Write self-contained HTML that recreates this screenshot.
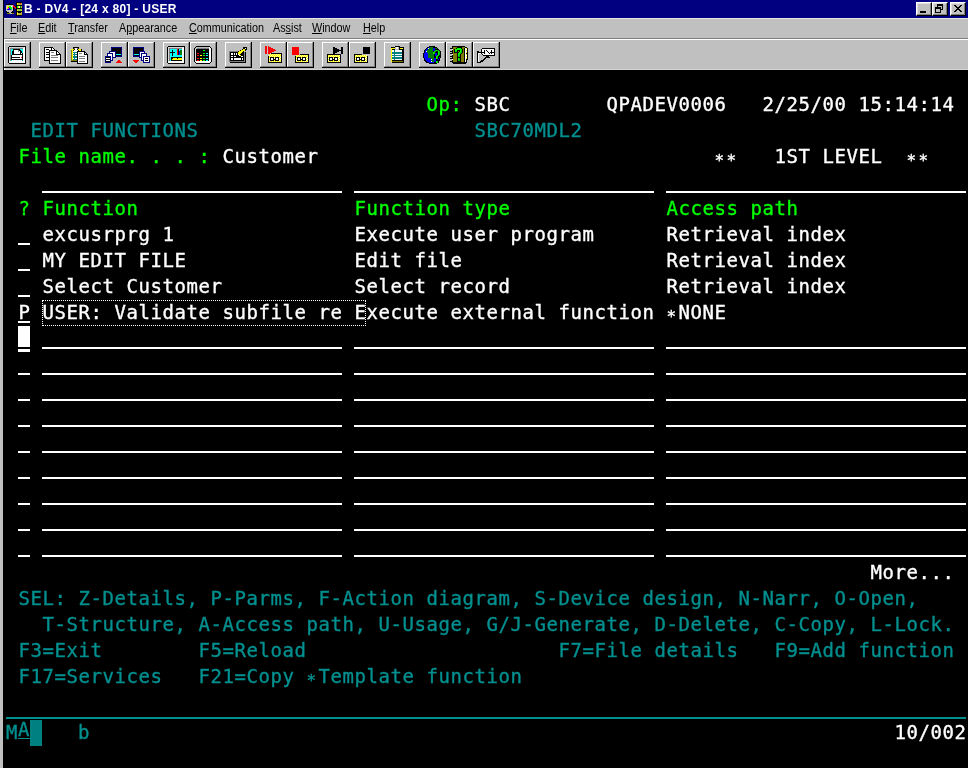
<!DOCTYPE html>
<html><head><meta charset="utf-8"><title>B - DV4 - [24 x 80] - USER</title>
<style>
html,body{margin:0;padding:0;background:#000;}
body{width:968px;height:768px;position:relative;overflow:hidden;font-family:"Liberation Sans",sans-serif;}
#lb{position:absolute;left:0;top:0;width:3px;height:768px;background:#c0c0c0;border-right:1px solid #000;}
#title{position:absolute;left:4px;top:0;width:964px;height:18px;background:#000080;}
#title .tt{position:absolute;left:20px;top:2px;color:#fff;font:bold 12px "Liberation Sans",sans-serif;line-height:14px;white-space:pre;letter-spacing:0.28px}
#menu{position:absolute;left:4px;top:18px;width:964px;height:19px;background:#c0c0c0;border-top:1px solid #e4e4e4}
#menu span{position:absolute;top:2px;font:12px "Liberation Sans",sans-serif;line-height:14px;color:#000;white-space:pre;transform:scaleX(0.9);transform-origin:0 0}
#menu u{text-decoration:underline;text-underline-offset:1px}
#sep{position:absolute;left:4px;top:38px;width:964px;height:1px;background:#808080;border-bottom:1px solid #fff}
#tool{position:absolute;left:4px;top:40px;width:964px;height:30px;background:#c0c0c0;}
.tb{position:absolute;top:42px;width:24px;height:23px;background:#c0c0c0;border:1px solid;border-color:#fff #808080 #808080 #fff;box-shadow:1px 0 0 #000,0 1px 0 #000,1px 1px 0 #000}
.tb svg{position:absolute;left:0;top:0}
.wb{position:absolute;top:2px;width:14px;height:12px;background:#c0c0c0;border:1px solid;border-color:#fff #000 #000 #fff;box-shadow:inset -1px -1px 0 #808080,inset 1px 1px 0 #dfdfdf}
.t{position:absolute;font:19px "DejaVu Sans Mono","Liberation Mono",monospace;letter-spacing:0.56px;line-height:26px;height:26px;white-space:pre;margin-top:-1px;-webkit-text-stroke:0.35px}
.t b{font-weight:normal;font-size:16px;letter-spacing:2.37px;position:relative;top:3px}
.g{color:#00ff00} .w{color:#fff} .c{color:#009090}
.u{position:absolute;height:2px;background:#fff;display:block}
.blk{position:absolute;display:block}
</style></head><body>
<div id="lb"></div>
<div id="title" style="will-change:transform"><span class="tt">B - DV4 - [24 x 80] - USER</span></div>
<div id="menu" style="will-change:transform">
<span style="left:6px"><u>F</u>ile</span><span style="left:34px"><u>E</u>dit</span><span style="left:64px"><u>T</u>ransfer</span><span style="left:115px">A<u>p</u>pearance</span><span style="left:185px"><u>C</u>ommunication</span><span style="left:269px">As<u>s</u>ist</span><span style="left:308px"><u>W</u>indow</span><span style="left:359px"><u>H</u>elp</span>
</div>
<div id="sep"></div>
<div id="tool"></div>
<i class="blk" style="left:4px;top:39px;width:1px;height:31px;background:#fff"></i>
<i class="blk" style="left:5px;top:69px;width:963px;height:1px;background:#d4d4d4"></i>
<div class="tb" style="left:4px"><svg width="18" height="18" viewBox="0 0 18 18" shape-rendering="crispEdges" style="position:absolute;left:3px;top:3px;"><rect x="1" y="0" width="17" height="1" fill="#000"/><rect x="0" y="1" width="1" height="1" fill="#000"/><rect x="1" y="1" width="15" height="1" fill="#d8d8d8"/><rect x="16" y="1" width="1" height="1" fill="#fff"/><rect x="17" y="1" width="1" height="1" fill="#000"/><rect x="0" y="2" width="1" height="1" fill="#000"/><rect x="1" y="2" width="1" height="1" fill="#d8d8d8"/><rect x="2" y="2" width="13" height="1" fill="#808080"/><rect x="15" y="2" width="2" height="1" fill="#fff"/><rect x="17" y="2" width="1" height="1" fill="#000"/><rect x="0" y="3" width="1" height="1" fill="#000"/><rect x="1" y="3" width="1" height="1" fill="#d8d8d8"/><rect x="2" y="3" width="1" height="1" fill="#808080"/><rect x="3" y="3" width="2" height="1" fill="#0ff"/><rect x="5" y="3" width="7" height="1" fill="#000"/><rect x="12" y="3" width="3" height="1" fill="#0ff"/><rect x="15" y="3" width="2" height="1" fill="#fff"/><rect x="17" y="3" width="1" height="1" fill="#000"/><rect x="0" y="4" width="1" height="1" fill="#000"/><rect x="1" y="4" width="1" height="1" fill="#d8d8d8"/><rect x="2" y="4" width="1" height="1" fill="#808080"/><rect x="3" y="4" width="2" height="1" fill="#0ff"/><rect x="5" y="4" width="1" height="1" fill="#000"/><rect x="6" y="4" width="4" height="1" fill="#fff"/><rect x="10" y="4" width="1" height="1" fill="#808080"/><rect x="11" y="4" width="2" height="1" fill="#000"/><rect x="13" y="4" width="2" height="1" fill="#0ff"/><rect x="15" y="4" width="2" height="1" fill="#fff"/><rect x="17" y="4" width="1" height="1" fill="#000"/><rect x="0" y="5" width="1" height="1" fill="#000"/><rect x="1" y="5" width="1" height="1" fill="#d8d8d8"/><rect x="2" y="5" width="1" height="1" fill="#808080"/><rect x="3" y="5" width="1" height="1" fill="#0ff"/><rect x="4" y="5" width="2" height="1" fill="#000"/><rect x="6" y="5" width="4" height="1" fill="#fff"/><rect x="10" y="5" width="1" height="1" fill="#808080"/><rect x="11" y="5" width="1" height="1" fill="#fff"/><rect x="12" y="5" width="2" height="1" fill="#000"/><rect x="14" y="5" width="1" height="1" fill="#0ff"/><rect x="15" y="5" width="2" height="1" fill="#fff"/><rect x="17" y="5" width="1" height="1" fill="#000"/><rect x="0" y="6" width="1" height="1" fill="#000"/><rect x="1" y="6" width="1" height="1" fill="#d8d8d8"/><rect x="2" y="6" width="1" height="1" fill="#808080"/><rect x="3" y="6" width="1" height="1" fill="#0ff"/><rect x="4" y="6" width="2" height="1" fill="#000"/><rect x="6" y="6" width="6" height="1" fill="#fff"/><rect x="12" y="6" width="2" height="1" fill="#000"/><rect x="14" y="6" width="1" height="1" fill="#0ff"/><rect x="15" y="6" width="2" height="1" fill="#fff"/><rect x="17" y="6" width="1" height="1" fill="#000"/><rect x="0" y="7" width="1" height="1" fill="#000"/><rect x="1" y="7" width="1" height="1" fill="#d8d8d8"/><rect x="2" y="7" width="1" height="1" fill="#808080"/><rect x="3" y="7" width="1" height="1" fill="#0ff"/><rect x="4" y="7" width="2" height="1" fill="#000"/><rect x="6" y="7" width="6" height="1" fill="#fff"/><rect x="12" y="7" width="1" height="1" fill="#000"/><rect x="13" y="7" width="1" height="1" fill="#fff"/><rect x="14" y="7" width="1" height="1" fill="#000"/><rect x="15" y="7" width="2" height="1" fill="#fff"/><rect x="17" y="7" width="1" height="1" fill="#000"/><rect x="0" y="8" width="1" height="1" fill="#000"/><rect x="1" y="8" width="1" height="1" fill="#d8d8d8"/><rect x="2" y="8" width="1" height="1" fill="#808080"/><rect x="3" y="8" width="1" height="1" fill="#0ff"/><rect x="4" y="8" width="11" height="1" fill="#000"/><rect x="15" y="8" width="2" height="1" fill="#fff"/><rect x="17" y="8" width="1" height="1" fill="#000"/><rect x="0" y="9" width="1" height="1" fill="#000"/><rect x="1" y="9" width="1" height="1" fill="#d8d8d8"/><rect x="2" y="9" width="1" height="1" fill="#808080"/><rect x="3" y="9" width="1" height="1" fill="#000"/><rect x="4" y="9" width="10" height="1" fill="#fff"/><rect x="14" y="9" width="1" height="1" fill="#000"/><rect x="15" y="9" width="2" height="1" fill="#fff"/><rect x="17" y="9" width="1" height="1" fill="#000"/><rect x="0" y="10" width="1" height="1" fill="#000"/><rect x="1" y="10" width="1" height="1" fill="#d8d8d8"/><rect x="2" y="10" width="1" height="1" fill="#808080"/><rect x="3" y="10" width="1" height="1" fill="#000"/><rect x="4" y="10" width="10" height="1" fill="#fff"/><rect x="14" y="10" width="1" height="1" fill="#000"/><rect x="15" y="10" width="2" height="1" fill="#fff"/><rect x="17" y="10" width="1" height="1" fill="#000"/><rect x="0" y="11" width="1" height="1" fill="#000"/><rect x="1" y="11" width="1" height="1" fill="#d8d8d8"/><rect x="2" y="11" width="1" height="1" fill="#808080"/><rect x="3" y="11" width="9" height="1" fill="#000"/><rect x="12" y="11" width="1" height="1" fill="#fff"/><rect x="13" y="11" width="1" height="1" fill="#f00"/><rect x="14" y="11" width="1" height="1" fill="#000"/><rect x="15" y="11" width="2" height="1" fill="#fff"/><rect x="17" y="11" width="1" height="1" fill="#000"/><rect x="0" y="12" width="1" height="1" fill="#000"/><rect x="1" y="12" width="1" height="1" fill="#d8d8d8"/><rect x="2" y="12" width="1" height="1" fill="#808080"/><rect x="3" y="12" width="1" height="1" fill="#000"/><rect x="4" y="12" width="10" height="1" fill="#fff"/><rect x="14" y="12" width="1" height="1" fill="#000"/><rect x="15" y="12" width="2" height="1" fill="#fff"/><rect x="17" y="12" width="1" height="1" fill="#000"/><rect x="0" y="13" width="1" height="1" fill="#000"/><rect x="1" y="13" width="1" height="1" fill="#d8d8d8"/><rect x="2" y="13" width="1" height="1" fill="#808080"/><rect x="3" y="13" width="12" height="1" fill="#000"/><rect x="15" y="13" width="2" height="1" fill="#fff"/><rect x="17" y="13" width="1" height="1" fill="#000"/><rect x="0" y="14" width="1" height="1" fill="#000"/><rect x="1" y="14" width="1" height="1" fill="#d8d8d8"/><rect x="2" y="14" width="1" height="1" fill="#808080"/><rect x="3" y="14" width="1" height="1" fill="#0ff"/><rect x="4" y="14" width="10" height="1" fill="#fff"/><rect x="14" y="14" width="1" height="1" fill="#008080"/><rect x="15" y="14" width="2" height="1" fill="#fff"/><rect x="17" y="14" width="1" height="1" fill="#000"/><rect x="0" y="15" width="1" height="1" fill="#000"/><rect x="1" y="15" width="16" height="1" fill="#fff"/><rect x="17" y="15" width="1" height="1" fill="#000"/><rect x="0" y="16" width="1" height="1" fill="#000"/><rect x="1" y="16" width="16" height="1" fill="#fff"/><rect x="17" y="16" width="1" height="1" fill="#000"/><rect x="1" y="17" width="17" height="1" fill="#000"/></svg></div>
<div class="tb" style="left:39px"><svg width="17" height="17" viewBox="0 0 17 17" shape-rendering="crispEdges" style="position:absolute;left:4px;top:4px;"><rect x="0" y="0" width="9" height="1" fill="#000"/><rect x="0" y="1" width="1" height="1" fill="#000"/><rect x="1" y="1" width="6" height="1" fill="#fff"/><rect x="7" y="1" width="1" height="1" fill="#000"/><rect x="8" y="1" width="1" height="1" fill="#fff"/><rect x="9" y="1" width="1" height="1" fill="#000"/><rect x="0" y="2" width="1" height="1" fill="#000"/><rect x="1" y="2" width="1" height="1" fill="#fff"/><rect x="2" y="2" width="3" height="1" fill="#000"/><rect x="5" y="2" width="2" height="1" fill="#fff"/><rect x="7" y="2" width="1" height="1" fill="#000"/><rect x="8" y="2" width="2" height="1" fill="#fff"/><rect x="10" y="2" width="1" height="1" fill="#000"/><rect x="0" y="3" width="1" height="1" fill="#000"/><rect x="1" y="3" width="4" height="1" fill="#fff"/><rect x="5" y="3" width="8" height="1" fill="#000"/><rect x="0" y="4" width="1" height="1" fill="#000"/><rect x="1" y="4" width="4" height="1" fill="#fff"/><rect x="5" y="4" width="1" height="1" fill="#000"/><rect x="6" y="4" width="6" height="1" fill="#fff"/><rect x="12" y="4" width="2" height="1" fill="#000"/><rect x="0" y="5" width="1" height="1" fill="#000"/><rect x="1" y="5" width="1" height="1" fill="#fff"/><rect x="2" y="5" width="4" height="1" fill="#000"/><rect x="6" y="5" width="1" height="1" fill="#fff"/><rect x="7" y="5" width="3" height="1" fill="#808080"/><rect x="10" y="5" width="2" height="1" fill="#fff"/><rect x="12" y="5" width="1" height="1" fill="#000"/><rect x="13" y="5" width="1" height="1" fill="#fff"/><rect x="14" y="5" width="1" height="1" fill="#000"/><rect x="0" y="6" width="1" height="1" fill="#000"/><rect x="1" y="6" width="4" height="1" fill="#fff"/><rect x="5" y="6" width="1" height="1" fill="#000"/><rect x="6" y="6" width="6" height="1" fill="#fff"/><rect x="12" y="6" width="1" height="1" fill="#000"/><rect x="13" y="6" width="2" height="1" fill="#fff"/><rect x="15" y="6" width="1" height="1" fill="#000"/><rect x="0" y="7" width="1" height="1" fill="#000"/><rect x="1" y="7" width="1" height="1" fill="#fff"/><rect x="2" y="7" width="4" height="1" fill="#000"/><rect x="6" y="7" width="6" height="1" fill="#fff"/><rect x="12" y="7" width="5" height="1" fill="#000"/><rect x="0" y="8" width="1" height="1" fill="#000"/><rect x="1" y="8" width="4" height="1" fill="#fff"/><rect x="5" y="8" width="1" height="1" fill="#000"/><rect x="6" y="8" width="1" height="1" fill="#fff"/><rect x="7" y="8" width="7" height="1" fill="#808080"/><rect x="14" y="8" width="2" height="1" fill="#fff"/><rect x="16" y="8" width="1" height="1" fill="#000"/><rect x="0" y="9" width="1" height="1" fill="#000"/><rect x="1" y="9" width="4" height="1" fill="#fff"/><rect x="5" y="9" width="1" height="1" fill="#000"/><rect x="6" y="9" width="10" height="1" fill="#fff"/><rect x="16" y="9" width="1" height="1" fill="#000"/><rect x="0" y="10" width="1" height="1" fill="#000"/><rect x="1" y="10" width="1" height="1" fill="#fff"/><rect x="2" y="10" width="4" height="1" fill="#000"/><rect x="6" y="10" width="1" height="1" fill="#fff"/><rect x="7" y="10" width="7" height="1" fill="#808080"/><rect x="14" y="10" width="2" height="1" fill="#fff"/><rect x="16" y="10" width="1" height="1" fill="#000"/><rect x="0" y="11" width="1" height="1" fill="#000"/><rect x="1" y="11" width="4" height="1" fill="#fff"/><rect x="5" y="11" width="1" height="1" fill="#000"/><rect x="6" y="11" width="10" height="1" fill="#fff"/><rect x="16" y="11" width="1" height="1" fill="#000"/><rect x="0" y="12" width="1" height="1" fill="#000"/><rect x="1" y="12" width="4" height="1" fill="#fff"/><rect x="5" y="12" width="1" height="1" fill="#000"/><rect x="6" y="12" width="10" height="1" fill="#fff"/><rect x="16" y="12" width="1" height="1" fill="#000"/><rect x="0" y="13" width="6" height="1" fill="#000"/><rect x="6" y="13" width="1" height="1" fill="#fff"/><rect x="7" y="13" width="7" height="1" fill="#808080"/><rect x="14" y="13" width="2" height="1" fill="#fff"/><rect x="16" y="13" width="1" height="1" fill="#000"/><rect x="5" y="14" width="1" height="1" fill="#000"/><rect x="6" y="14" width="10" height="1" fill="#fff"/><rect x="16" y="14" width="1" height="1" fill="#000"/><rect x="5" y="15" width="1" height="1" fill="#000"/><rect x="6" y="15" width="10" height="1" fill="#fff"/><rect x="16" y="15" width="1" height="1" fill="#000"/><rect x="5" y="16" width="12" height="1" fill="#000"/></svg></div>
<div class="tb" style="left:66px"><svg width="17" height="17" viewBox="0 0 17 17" shape-rendering="crispEdges" style="position:absolute;left:4px;top:4px;"><rect x="2" y="0" width="6" height="1" fill="#000"/><rect x="2" y="1" width="1" height="1" fill="#000"/><rect x="3" y="1" width="1" height="1" fill="#808080"/><rect x="4" y="1" width="2" height="1" fill="#fff"/><rect x="6" y="1" width="1" height="1" fill="#808080"/><rect x="7" y="1" width="1" height="1" fill="#000"/><rect x="0" y="2" width="3" height="1" fill="#ff0"/><rect x="3" y="2" width="1" height="1" fill="#000"/><rect x="4" y="2" width="2" height="1" fill="#fff"/><rect x="6" y="2" width="1" height="1" fill="#000"/><rect x="7" y="2" width="3" height="1" fill="#ff0"/><rect x="10" y="2" width="1" height="1" fill="#000"/><rect x="0" y="3" width="1" height="1" fill="#808000"/><rect x="1" y="3" width="1" height="1" fill="#ff0"/><rect x="2" y="3" width="1" height="1" fill="#000"/><rect x="3" y="3" width="4" height="1" fill="#fff"/><rect x="7" y="3" width="1" height="1" fill="#000"/><rect x="8" y="3" width="2" height="1" fill="#ff0"/><rect x="10" y="3" width="1" height="1" fill="#000"/><rect x="0" y="4" width="1" height="1" fill="#808000"/><rect x="1" y="4" width="1" height="1" fill="#ff0"/><rect x="2" y="4" width="4" height="1" fill="#fff"/><rect x="6" y="4" width="8" height="1" fill="#000"/><rect x="0" y="5" width="1" height="1" fill="#808000"/><rect x="1" y="5" width="1" height="1" fill="#ff0"/><rect x="2" y="5" width="4" height="1" fill="#008080"/><rect x="6" y="5" width="1" height="1" fill="#000"/><rect x="7" y="5" width="6" height="1" fill="#fff"/><rect x="13" y="5" width="2" height="1" fill="#000"/><rect x="0" y="6" width="1" height="1" fill="#808000"/><rect x="1" y="6" width="1" height="1" fill="#ff0"/><rect x="2" y="6" width="1" height="1" fill="#fff"/><rect x="3" y="6" width="1" height="1" fill="#008080"/><rect x="4" y="6" width="2" height="1" fill="#fff"/><rect x="6" y="6" width="1" height="1" fill="#000"/><rect x="7" y="6" width="1" height="1" fill="#fff"/><rect x="8" y="6" width="3" height="1" fill="#808080"/><rect x="11" y="6" width="2" height="1" fill="#fff"/><rect x="13" y="6" width="1" height="1" fill="#000"/><rect x="14" y="6" width="1" height="1" fill="#fff"/><rect x="15" y="6" width="1" height="1" fill="#000"/><rect x="0" y="7" width="1" height="1" fill="#808000"/><rect x="1" y="7" width="1" height="1" fill="#ff0"/><rect x="2" y="7" width="4" height="1" fill="#008080"/><rect x="6" y="7" width="1" height="1" fill="#000"/><rect x="7" y="7" width="6" height="1" fill="#fff"/><rect x="13" y="7" width="4" height="1" fill="#000"/><rect x="0" y="8" width="1" height="1" fill="#808000"/><rect x="1" y="8" width="1" height="1" fill="#ff0"/><rect x="2" y="8" width="1" height="1" fill="#fff"/><rect x="3" y="8" width="1" height="1" fill="#008080"/><rect x="4" y="8" width="2" height="1" fill="#fff"/><rect x="6" y="8" width="1" height="1" fill="#000"/><rect x="7" y="8" width="9" height="1" fill="#fff"/><rect x="16" y="8" width="1" height="1" fill="#000"/><rect x="0" y="9" width="1" height="1" fill="#808000"/><rect x="1" y="9" width="1" height="1" fill="#ff0"/><rect x="2" y="9" width="4" height="1" fill="#008080"/><rect x="6" y="9" width="1" height="1" fill="#000"/><rect x="7" y="9" width="1" height="1" fill="#fff"/><rect x="8" y="9" width="6" height="1" fill="#808080"/><rect x="14" y="9" width="2" height="1" fill="#fff"/><rect x="16" y="9" width="1" height="1" fill="#000"/><rect x="0" y="10" width="1" height="1" fill="#808000"/><rect x="1" y="10" width="1" height="1" fill="#ff0"/><rect x="2" y="10" width="4" height="1" fill="#008080"/><rect x="6" y="10" width="1" height="1" fill="#000"/><rect x="7" y="10" width="9" height="1" fill="#fff"/><rect x="16" y="10" width="1" height="1" fill="#000"/><rect x="0" y="11" width="1" height="1" fill="#808000"/><rect x="1" y="11" width="1" height="1" fill="#ff0"/><rect x="2" y="11" width="1" height="1" fill="#fff"/><rect x="3" y="11" width="1" height="1" fill="#008080"/><rect x="4" y="11" width="2" height="1" fill="#fff"/><rect x="6" y="11" width="1" height="1" fill="#000"/><rect x="7" y="11" width="1" height="1" fill="#fff"/><rect x="8" y="11" width="6" height="1" fill="#808080"/><rect x="14" y="11" width="2" height="1" fill="#fff"/><rect x="16" y="11" width="1" height="1" fill="#000"/><rect x="0" y="12" width="1" height="1" fill="#808000"/><rect x="1" y="12" width="1" height="1" fill="#ff0"/><rect x="2" y="12" width="4" height="1" fill="#008080"/><rect x="6" y="12" width="1" height="1" fill="#000"/><rect x="7" y="12" width="9" height="1" fill="#fff"/><rect x="16" y="12" width="1" height="1" fill="#000"/><rect x="0" y="13" width="6" height="1" fill="#808000"/><rect x="6" y="13" width="1" height="1" fill="#000"/><rect x="7" y="13" width="9" height="1" fill="#fff"/><rect x="16" y="13" width="1" height="1" fill="#000"/><rect x="0" y="14" width="7" height="1" fill="#000"/><rect x="7" y="14" width="1" height="1" fill="#fff"/><rect x="8" y="14" width="6" height="1" fill="#808080"/><rect x="14" y="14" width="2" height="1" fill="#fff"/><rect x="16" y="14" width="1" height="1" fill="#000"/><rect x="6" y="15" width="1" height="1" fill="#000"/><rect x="7" y="15" width="9" height="1" fill="#fff"/><rect x="16" y="15" width="1" height="1" fill="#000"/><rect x="6" y="16" width="11" height="1" fill="#000"/></svg></div>
<div class="tb" style="left:101px"><svg width="17" height="16" viewBox="0 0 17 16" shape-rendering="crispEdges" style="position:absolute;left:3px;top:4px;"><rect x="6" y="0" width="11" height="1" fill="#000080"/><rect x="6" y="1" width="1" height="1" fill="#000080"/><rect x="7" y="1" width="9" height="1" fill="#000"/><rect x="16" y="1" width="1" height="1" fill="#000080"/><rect x="6" y="2" width="1" height="1" fill="#000080"/><rect x="7" y="2" width="9" height="1" fill="#000"/><rect x="16" y="2" width="1" height="1" fill="#000080"/><rect x="6" y="3" width="1" height="1" fill="#000080"/><rect x="7" y="3" width="9" height="1" fill="#000"/><rect x="16" y="3" width="1" height="1" fill="#000080"/><rect x="4" y="4" width="7" height="1" fill="#000080"/><rect x="11" y="4" width="5" height="1" fill="#000"/><rect x="16" y="4" width="1" height="1" fill="#000080"/><rect x="4" y="5" width="1" height="1" fill="#000080"/><rect x="5" y="5" width="5" height="1" fill="#fff"/><rect x="10" y="5" width="1" height="1" fill="#000080"/><rect x="11" y="5" width="5" height="1" fill="#000"/><rect x="16" y="5" width="1" height="1" fill="#000080"/><rect x="2" y="6" width="6" height="1" fill="#000080"/><rect x="8" y="6" width="2" height="1" fill="#fff"/><rect x="10" y="6" width="1" height="1" fill="#000080"/><rect x="11" y="6" width="5" height="1" fill="#000"/><rect x="16" y="6" width="1" height="1" fill="#000080"/><rect x="2" y="7" width="1" height="1" fill="#000080"/><rect x="3" y="7" width="4" height="1" fill="#fff"/><rect x="7" y="7" width="1" height="1" fill="#000080"/><rect x="8" y="7" width="2" height="1" fill="#fff"/><rect x="10" y="7" width="1" height="1" fill="#000080"/><rect x="11" y="7" width="5" height="1" fill="#0ff"/><rect x="16" y="7" width="1" height="1" fill="#000080"/><rect x="2" y="8" width="1" height="1" fill="#000080"/><rect x="3" y="8" width="4" height="1" fill="#fff"/><rect x="7" y="8" width="1" height="1" fill="#000080"/><rect x="8" y="8" width="2" height="1" fill="#fff"/><rect x="10" y="8" width="1" height="1" fill="#000080"/><rect x="11" y="8" width="5" height="1" fill="#000"/><rect x="16" y="8" width="1" height="1" fill="#000080"/><rect x="0" y="9" width="6" height="1" fill="#000080"/><rect x="6" y="9" width="1" height="1" fill="#fff"/><rect x="7" y="9" width="1" height="1" fill="#000080"/><rect x="8" y="9" width="2" height="1" fill="#fff"/><rect x="10" y="9" width="7" height="1" fill="#000080"/><rect x="0" y="10" width="1" height="1" fill="#000080"/><rect x="1" y="10" width="4" height="1" fill="#000"/><rect x="5" y="10" width="1" height="1" fill="#000080"/><rect x="6" y="10" width="1" height="1" fill="#fff"/><rect x="7" y="10" width="4" height="1" fill="#000080"/><rect x="0" y="11" width="1" height="1" fill="#000080"/><rect x="1" y="11" width="4" height="1" fill="#fff"/><rect x="5" y="11" width="1" height="1" fill="#000080"/><rect x="6" y="11" width="1" height="1" fill="#fff"/><rect x="7" y="11" width="1" height="1" fill="#000080"/><rect x="0" y="12" width="1" height="1" fill="#000080"/><rect x="1" y="12" width="4" height="1" fill="#000"/><rect x="5" y="12" width="1" height="1" fill="#000080"/><rect x="6" y="12" width="1" height="1" fill="#fff"/><rect x="7" y="12" width="1" height="1" fill="#000080"/><rect x="0" y="13" width="1" height="1" fill="#000080"/><rect x="1" y="13" width="4" height="1" fill="#fff"/><rect x="5" y="13" width="3" height="1" fill="#000080"/><rect x="13" y="13" width="2" height="1" fill="#f00"/><rect x="0" y="14" width="1" height="1" fill="#000080"/><rect x="1" y="14" width="4" height="1" fill="#000"/><rect x="5" y="14" width="1" height="1" fill="#000080"/><rect x="12" y="14" width="4" height="1" fill="#f00"/><rect x="0" y="15" width="6" height="1" fill="#000080"/><rect x="11" y="15" width="6" height="1" fill="#f00"/></svg></div>
<div class="tb" style="left:128px"><svg width="17" height="16" viewBox="0 0 17 16" shape-rendering="crispEdges" style="position:absolute;left:4px;top:4px;"><rect x="0" y="0" width="11" height="1" fill="#000080"/><rect x="0" y="1" width="1" height="1" fill="#000080"/><rect x="1" y="1" width="9" height="1" fill="#000"/><rect x="10" y="1" width="1" height="1" fill="#000080"/><rect x="0" y="2" width="1" height="1" fill="#000080"/><rect x="1" y="2" width="9" height="1" fill="#000"/><rect x="10" y="2" width="1" height="1" fill="#000080"/><rect x="0" y="3" width="1" height="1" fill="#000080"/><rect x="1" y="3" width="9" height="1" fill="#000"/><rect x="10" y="3" width="1" height="1" fill="#000080"/><rect x="0" y="4" width="1" height="1" fill="#000080"/><rect x="1" y="4" width="5" height="1" fill="#000"/><rect x="6" y="4" width="6" height="1" fill="#000080"/><rect x="0" y="5" width="1" height="1" fill="#000080"/><rect x="1" y="5" width="5" height="1" fill="#000"/><rect x="6" y="5" width="1" height="1" fill="#000080"/><rect x="7" y="5" width="4" height="1" fill="#fff"/><rect x="11" y="5" width="1" height="1" fill="#000080"/><rect x="0" y="6" width="1" height="1" fill="#000080"/><rect x="1" y="6" width="5" height="1" fill="#000"/><rect x="6" y="6" width="1" height="1" fill="#000080"/><rect x="7" y="6" width="1" height="1" fill="#fff"/><rect x="8" y="6" width="6" height="1" fill="#000080"/><rect x="0" y="7" width="1" height="1" fill="#000080"/><rect x="1" y="7" width="5" height="1" fill="#0ff"/><rect x="6" y="7" width="1" height="1" fill="#000080"/><rect x="7" y="7" width="1" height="1" fill="#fff"/><rect x="8" y="7" width="1" height="1" fill="#000080"/><rect x="9" y="7" width="4" height="1" fill="#fff"/><rect x="13" y="7" width="1" height="1" fill="#000080"/><rect x="0" y="8" width="1" height="1" fill="#000080"/><rect x="1" y="8" width="5" height="1" fill="#000"/><rect x="6" y="8" width="1" height="1" fill="#000080"/><rect x="7" y="8" width="1" height="1" fill="#fff"/><rect x="8" y="8" width="1" height="1" fill="#000080"/><rect x="9" y="8" width="4" height="1" fill="#fff"/><rect x="13" y="8" width="1" height="1" fill="#000080"/><rect x="0" y="9" width="7" height="1" fill="#000080"/><rect x="7" y="9" width="1" height="1" fill="#fff"/><rect x="8" y="9" width="1" height="1" fill="#000080"/><rect x="9" y="9" width="1" height="1" fill="#fff"/><rect x="10" y="9" width="7" height="1" fill="#000080"/><rect x="6" y="10" width="3" height="1" fill="#000080"/><rect x="9" y="10" width="1" height="1" fill="#fff"/><rect x="10" y="10" width="1" height="1" fill="#000080"/><rect x="11" y="10" width="5" height="1" fill="#fff"/><rect x="16" y="10" width="1" height="1" fill="#000080"/><rect x="8" y="11" width="1" height="1" fill="#000080"/><rect x="9" y="11" width="1" height="1" fill="#fff"/><rect x="10" y="11" width="1" height="1" fill="#000080"/><rect x="11" y="11" width="1" height="1" fill="#fff"/><rect x="12" y="11" width="3" height="1" fill="#000"/><rect x="15" y="11" width="1" height="1" fill="#fff"/><rect x="16" y="11" width="1" height="1" fill="#000080"/><rect x="8" y="12" width="1" height="1" fill="#000080"/><rect x="9" y="12" width="1" height="1" fill="#fff"/><rect x="10" y="12" width="1" height="1" fill="#000080"/><rect x="11" y="12" width="5" height="1" fill="#fff"/><rect x="16" y="12" width="1" height="1" fill="#000080"/><rect x="0" y="13" width="6" height="1" fill="#f00"/><rect x="8" y="13" width="3" height="1" fill="#000080"/><rect x="11" y="13" width="1" height="1" fill="#fff"/><rect x="12" y="13" width="3" height="1" fill="#000"/><rect x="15" y="13" width="1" height="1" fill="#fff"/><rect x="16" y="13" width="1" height="1" fill="#000080"/><rect x="1" y="14" width="4" height="1" fill="#f00"/><rect x="10" y="14" width="1" height="1" fill="#000080"/><rect x="11" y="14" width="5" height="1" fill="#fff"/><rect x="16" y="14" width="1" height="1" fill="#000080"/><rect x="2" y="15" width="2" height="1" fill="#f00"/><rect x="10" y="15" width="7" height="1" fill="#000080"/></svg></div>
<div class="tb" style="left:163px"><svg width="18" height="18" viewBox="0 0 18 18" shape-rendering="crispEdges" style="position:absolute;left:3px;top:3px;"><rect x="1" y="0" width="17" height="1" fill="#000"/><rect x="0" y="1" width="1" height="1" fill="#000"/><rect x="1" y="1" width="15" height="1" fill="#d8d8d8"/><rect x="16" y="1" width="1" height="1" fill="#fff"/><rect x="17" y="1" width="1" height="1" fill="#000"/><rect x="0" y="2" width="1" height="1" fill="#000"/><rect x="1" y="2" width="1" height="1" fill="#d8d8d8"/><rect x="2" y="2" width="13" height="1" fill="#808080"/><rect x="15" y="2" width="2" height="1" fill="#fff"/><rect x="17" y="2" width="1" height="1" fill="#000"/><rect x="0" y="3" width="1" height="1" fill="#000"/><rect x="1" y="3" width="1" height="1" fill="#d8d8d8"/><rect x="2" y="3" width="1" height="1" fill="#808080"/><rect x="3" y="3" width="7" height="1" fill="#0ff"/><rect x="10" y="3" width="1" height="1" fill="#f00"/><rect x="11" y="3" width="1" height="1" fill="#000"/><rect x="12" y="3" width="3" height="1" fill="#0ff"/><rect x="15" y="3" width="2" height="1" fill="#fff"/><rect x="17" y="3" width="1" height="1" fill="#000"/><rect x="0" y="4" width="1" height="1" fill="#000"/><rect x="1" y="4" width="1" height="1" fill="#d8d8d8"/><rect x="2" y="4" width="1" height="1" fill="#808080"/><rect x="3" y="4" width="2" height="1" fill="#0ff"/><rect x="5" y="4" width="1" height="1" fill="#000"/><rect x="6" y="4" width="4" height="1" fill="#0ff"/><rect x="10" y="4" width="1" height="1" fill="#f00"/><rect x="11" y="4" width="1" height="1" fill="#000"/><rect x="12" y="4" width="1" height="1" fill="#0ff"/><rect x="13" y="4" width="2" height="1" fill="#008000"/><rect x="15" y="4" width="2" height="1" fill="#fff"/><rect x="17" y="4" width="1" height="1" fill="#000"/><rect x="0" y="5" width="1" height="1" fill="#000"/><rect x="1" y="5" width="1" height="1" fill="#d8d8d8"/><rect x="2" y="5" width="1" height="1" fill="#808080"/><rect x="3" y="5" width="2" height="1" fill="#0ff"/><rect x="5" y="5" width="1" height="1" fill="#000"/><rect x="6" y="5" width="4" height="1" fill="#0ff"/><rect x="10" y="5" width="1" height="1" fill="#f00"/><rect x="11" y="5" width="1" height="1" fill="#000"/><rect x="12" y="5" width="1" height="1" fill="#00f"/><rect x="13" y="5" width="2" height="1" fill="#008000"/><rect x="15" y="5" width="2" height="1" fill="#fff"/><rect x="17" y="5" width="1" height="1" fill="#000"/><rect x="0" y="6" width="1" height="1" fill="#000"/><rect x="1" y="6" width="1" height="1" fill="#d8d8d8"/><rect x="2" y="6" width="1" height="1" fill="#808080"/><rect x="3" y="6" width="5" height="1" fill="#000"/><rect x="8" y="6" width="2" height="1" fill="#0ff"/><rect x="10" y="6" width="1" height="1" fill="#f00"/><rect x="11" y="6" width="1" height="1" fill="#000"/><rect x="12" y="6" width="1" height="1" fill="#00f"/><rect x="13" y="6" width="2" height="1" fill="#008000"/><rect x="15" y="6" width="2" height="1" fill="#fff"/><rect x="17" y="6" width="1" height="1" fill="#000"/><rect x="0" y="7" width="1" height="1" fill="#000"/><rect x="1" y="7" width="1" height="1" fill="#d8d8d8"/><rect x="2" y="7" width="1" height="1" fill="#808080"/><rect x="3" y="7" width="2" height="1" fill="#0ff"/><rect x="5" y="7" width="1" height="1" fill="#000"/><rect x="6" y="7" width="4" height="1" fill="#0ff"/><rect x="10" y="7" width="1" height="1" fill="#f00"/><rect x="11" y="7" width="1" height="1" fill="#000"/><rect x="12" y="7" width="1" height="1" fill="#00f"/><rect x="13" y="7" width="2" height="1" fill="#008000"/><rect x="15" y="7" width="2" height="1" fill="#fff"/><rect x="17" y="7" width="1" height="1" fill="#000"/><rect x="0" y="8" width="1" height="1" fill="#000"/><rect x="1" y="8" width="1" height="1" fill="#d8d8d8"/><rect x="2" y="8" width="1" height="1" fill="#808080"/><rect x="3" y="8" width="2" height="1" fill="#0ff"/><rect x="5" y="8" width="1" height="1" fill="#000"/><rect x="6" y="8" width="4" height="1" fill="#0ff"/><rect x="10" y="8" width="1" height="1" fill="#f00"/><rect x="11" y="8" width="1" height="1" fill="#000"/><rect x="12" y="8" width="1" height="1" fill="#00f"/><rect x="13" y="8" width="2" height="1" fill="#008000"/><rect x="15" y="8" width="2" height="1" fill="#fff"/><rect x="17" y="8" width="1" height="1" fill="#000"/><rect x="0" y="9" width="1" height="1" fill="#000"/><rect x="1" y="9" width="1" height="1" fill="#d8d8d8"/><rect x="2" y="9" width="1" height="1" fill="#808080"/><rect x="3" y="9" width="2" height="1" fill="#0ff"/><rect x="5" y="9" width="1" height="1" fill="#000"/><rect x="6" y="9" width="9" height="1" fill="#0ff"/><rect x="15" y="9" width="2" height="1" fill="#fff"/><rect x="17" y="9" width="1" height="1" fill="#000"/><rect x="0" y="10" width="1" height="1" fill="#000"/><rect x="1" y="10" width="1" height="1" fill="#d8d8d8"/><rect x="2" y="10" width="1" height="1" fill="#808080"/><rect x="3" y="10" width="12" height="1" fill="#0ff"/><rect x="15" y="10" width="2" height="1" fill="#fff"/><rect x="17" y="10" width="1" height="1" fill="#000"/><rect x="0" y="11" width="1" height="1" fill="#000"/><rect x="1" y="11" width="1" height="1" fill="#d8d8d8"/><rect x="2" y="11" width="1" height="1" fill="#808080"/><rect x="3" y="11" width="1" height="1" fill="#0ff"/><rect x="4" y="11" width="11" height="1" fill="#000"/><rect x="15" y="11" width="2" height="1" fill="#fff"/><rect x="17" y="11" width="1" height="1" fill="#000"/><rect x="0" y="12" width="1" height="1" fill="#000"/><rect x="1" y="12" width="1" height="1" fill="#d8d8d8"/><rect x="2" y="12" width="1" height="1" fill="#808080"/><rect x="3" y="12" width="1" height="1" fill="#0ff"/><rect x="4" y="12" width="2" height="1" fill="#000"/><rect x="6" y="12" width="4" height="1" fill="#ff0"/><rect x="10" y="12" width="1" height="1" fill="#000"/><rect x="11" y="12" width="4" height="1" fill="#ff0"/><rect x="15" y="12" width="2" height="1" fill="#fff"/><rect x="17" y="12" width="1" height="1" fill="#000"/><rect x="0" y="13" width="1" height="1" fill="#000"/><rect x="1" y="13" width="1" height="1" fill="#d8d8d8"/><rect x="2" y="13" width="1" height="1" fill="#808080"/><rect x="3" y="13" width="1" height="1" fill="#0ff"/><rect x="4" y="13" width="1" height="1" fill="#000"/><rect x="5" y="13" width="10" height="1" fill="#ff0"/><rect x="15" y="13" width="2" height="1" fill="#fff"/><rect x="17" y="13" width="1" height="1" fill="#000"/><rect x="0" y="14" width="1" height="1" fill="#000"/><rect x="1" y="14" width="1" height="1" fill="#d8d8d8"/><rect x="2" y="14" width="1" height="1" fill="#808080"/><rect x="3" y="14" width="1" height="1" fill="#0ff"/><rect x="4" y="14" width="11" height="1" fill="#000"/><rect x="15" y="14" width="2" height="1" fill="#fff"/><rect x="17" y="14" width="1" height="1" fill="#000"/><rect x="0" y="15" width="1" height="1" fill="#000"/><rect x="1" y="15" width="16" height="1" fill="#fff"/><rect x="17" y="15" width="1" height="1" fill="#000"/><rect x="0" y="16" width="1" height="1" fill="#000"/><rect x="1" y="16" width="16" height="1" fill="#fff"/><rect x="17" y="16" width="1" height="1" fill="#000"/><rect x="1" y="17" width="17" height="1" fill="#000"/></svg></div>
<div class="tb" style="left:190px"><svg width="18" height="18" viewBox="0 0 18 18" shape-rendering="crispEdges" style="position:absolute;left:3px;top:3px;"><rect x="2" y="0" width="14" height="1" fill="#000"/><rect x="1" y="1" width="1" height="1" fill="#000"/><rect x="2" y="1" width="13" height="1" fill="#c0c0c0"/><rect x="15" y="1" width="1" height="1" fill="#fff"/><rect x="16" y="1" width="1" height="1" fill="#000"/><rect x="0" y="2" width="1" height="1" fill="#000"/><rect x="1" y="2" width="2" height="1" fill="#c0c0c0"/><rect x="3" y="2" width="12" height="1" fill="#808080"/><rect x="15" y="2" width="2" height="1" fill="#fff"/><rect x="17" y="2" width="1" height="1" fill="#000"/><rect x="0" y="3" width="1" height="1" fill="#000"/><rect x="1" y="3" width="1" height="1" fill="#d8d8d8"/><rect x="2" y="3" width="13" height="1" fill="#000"/><rect x="15" y="3" width="2" height="1" fill="#fff"/><rect x="17" y="3" width="1" height="1" fill="#000"/><rect x="0" y="4" width="1" height="1" fill="#000"/><rect x="1" y="4" width="1" height="1" fill="#d8d8d8"/><rect x="2" y="4" width="7" height="1" fill="#000"/><rect x="9" y="4" width="2" height="1" fill="#0f0"/><rect x="11" y="4" width="4" height="1" fill="#000"/><rect x="15" y="4" width="2" height="1" fill="#fff"/><rect x="17" y="4" width="1" height="1" fill="#000"/><rect x="0" y="5" width="1" height="1" fill="#000"/><rect x="1" y="5" width="1" height="1" fill="#d8d8d8"/><rect x="2" y="5" width="13" height="1" fill="#000"/><rect x="15" y="5" width="2" height="1" fill="#fff"/><rect x="17" y="5" width="1" height="1" fill="#000"/><rect x="0" y="6" width="1" height="1" fill="#000"/><rect x="1" y="6" width="1" height="1" fill="#d8d8d8"/><rect x="2" y="6" width="13" height="1" fill="#000"/><rect x="15" y="6" width="2" height="1" fill="#fff"/><rect x="17" y="6" width="1" height="1" fill="#000"/><rect x="0" y="7" width="1" height="1" fill="#000"/><rect x="1" y="7" width="1" height="1" fill="#d8d8d8"/><rect x="2" y="7" width="1" height="1" fill="#000"/><rect x="3" y="7" width="2" height="1" fill="#f00"/><rect x="5" y="7" width="4" height="1" fill="#000"/><rect x="9" y="7" width="2" height="1" fill="#0f0"/><rect x="11" y="7" width="1" height="1" fill="#000"/><rect x="12" y="7" width="2" height="1" fill="#0ff"/><rect x="14" y="7" width="1" height="1" fill="#000"/><rect x="15" y="7" width="2" height="1" fill="#fff"/><rect x="17" y="7" width="1" height="1" fill="#000"/><rect x="0" y="8" width="1" height="1" fill="#000"/><rect x="1" y="8" width="1" height="1" fill="#d8d8d8"/><rect x="2" y="8" width="13" height="1" fill="#000"/><rect x="15" y="8" width="2" height="1" fill="#fff"/><rect x="17" y="8" width="1" height="1" fill="#000"/><rect x="0" y="9" width="1" height="1" fill="#000"/><rect x="1" y="9" width="1" height="1" fill="#d8d8d8"/><rect x="2" y="9" width="1" height="1" fill="#000"/><rect x="3" y="9" width="2" height="1" fill="#f00"/><rect x="5" y="9" width="1" height="1" fill="#000"/><rect x="6" y="9" width="2" height="1" fill="#ff0"/><rect x="8" y="9" width="1" height="1" fill="#000"/><rect x="9" y="9" width="2" height="1" fill="#0f0"/><rect x="11" y="9" width="1" height="1" fill="#000"/><rect x="12" y="9" width="2" height="1" fill="#0ff"/><rect x="14" y="9" width="1" height="1" fill="#000"/><rect x="15" y="9" width="2" height="1" fill="#fff"/><rect x="17" y="9" width="1" height="1" fill="#000"/><rect x="0" y="10" width="1" height="1" fill="#000"/><rect x="1" y="10" width="1" height="1" fill="#d8d8d8"/><rect x="2" y="10" width="13" height="1" fill="#000"/><rect x="15" y="10" width="2" height="1" fill="#fff"/><rect x="17" y="10" width="1" height="1" fill="#000"/><rect x="0" y="11" width="1" height="1" fill="#000"/><rect x="1" y="11" width="1" height="1" fill="#d8d8d8"/><rect x="2" y="11" width="13" height="1" fill="#000"/><rect x="15" y="11" width="2" height="1" fill="#fff"/><rect x="17" y="11" width="1" height="1" fill="#000"/><rect x="0" y="12" width="1" height="1" fill="#000"/><rect x="1" y="12" width="1" height="1" fill="#d8d8d8"/><rect x="2" y="12" width="1" height="1" fill="#000"/><rect x="3" y="12" width="2" height="1" fill="#f00"/><rect x="5" y="12" width="1" height="1" fill="#000"/><rect x="6" y="12" width="2" height="1" fill="#ff0"/><rect x="8" y="12" width="1" height="1" fill="#000"/><rect x="9" y="12" width="2" height="1" fill="#0f0"/><rect x="11" y="12" width="1" height="1" fill="#000"/><rect x="12" y="12" width="2" height="1" fill="#0ff"/><rect x="14" y="12" width="1" height="1" fill="#000"/><rect x="15" y="12" width="2" height="1" fill="#fff"/><rect x="17" y="12" width="1" height="1" fill="#000"/><rect x="0" y="13" width="1" height="1" fill="#000"/><rect x="1" y="13" width="1" height="1" fill="#d8d8d8"/><rect x="2" y="13" width="13" height="1" fill="#000"/><rect x="15" y="13" width="2" height="1" fill="#fff"/><rect x="17" y="13" width="1" height="1" fill="#000"/><rect x="0" y="14" width="1" height="1" fill="#000"/><rect x="1" y="14" width="1" height="1" fill="#d8d8d8"/><rect x="2" y="14" width="1" height="1" fill="#000"/><rect x="3" y="14" width="2" height="1" fill="#f00"/><rect x="5" y="14" width="1" height="1" fill="#000"/><rect x="6" y="14" width="2" height="1" fill="#ff0"/><rect x="8" y="14" width="1" height="1" fill="#000"/><rect x="9" y="14" width="2" height="1" fill="#0f0"/><rect x="11" y="14" width="1" height="1" fill="#000"/><rect x="12" y="14" width="2" height="1" fill="#0ff"/><rect x="14" y="14" width="1" height="1" fill="#000"/><rect x="15" y="14" width="2" height="1" fill="#fff"/><rect x="17" y="14" width="1" height="1" fill="#000"/><rect x="0" y="15" width="1" height="1" fill="#000"/><rect x="1" y="15" width="16" height="1" fill="#fff"/><rect x="17" y="15" width="1" height="1" fill="#000"/><rect x="1" y="16" width="1" height="1" fill="#000"/><rect x="2" y="16" width="14" height="1" fill="#fff"/><rect x="16" y="16" width="1" height="1" fill="#000"/><rect x="2" y="17" width="14" height="1" fill="#000"/></svg></div>
<div class="tb" style="left:225px"><svg width="18" height="16" viewBox="0 0 18 16" shape-rendering="crispEdges" style="position:absolute;left:3px;top:4px;"><rect x="14" y="0" width="4" height="1" fill="#000"/><rect x="14" y="1" width="2" height="1" fill="#000"/><rect x="16" y="1" width="1" height="1" fill="#fff"/><rect x="17" y="1" width="1" height="1" fill="#000"/><rect x="13" y="2" width="1" height="1" fill="#000"/><rect x="14" y="2" width="2" height="1" fill="#ff0"/><rect x="16" y="2" width="2" height="1" fill="#000"/><rect x="11" y="3" width="1" height="1" fill="#000"/><rect x="12" y="3" width="4" height="1" fill="#ff0"/><rect x="16" y="3" width="1" height="1" fill="#000"/><rect x="0" y="4" width="9" height="1" fill="#808080"/><rect x="9" y="4" width="1" height="1" fill="#000"/><rect x="10" y="4" width="4" height="1" fill="#ff0"/><rect x="14" y="4" width="1" height="1" fill="#000"/><rect x="0" y="5" width="1" height="1" fill="#808080"/><rect x="1" y="5" width="8" height="1" fill="#000"/><rect x="9" y="5" width="4" height="1" fill="#ff0"/><rect x="13" y="5" width="2" height="1" fill="#000"/><rect x="15" y="5" width="1" height="1" fill="#808080"/><rect x="16" y="5" width="1" height="1" fill="#000"/><rect x="0" y="6" width="1" height="1" fill="#808080"/><rect x="1" y="6" width="1" height="1" fill="#000"/><rect x="2" y="6" width="2" height="1" fill="#fff"/><rect x="4" y="6" width="1" height="1" fill="#000"/><rect x="5" y="6" width="1" height="1" fill="#fff"/><rect x="6" y="6" width="1" height="1" fill="#000"/><rect x="7" y="6" width="1" height="1" fill="#fff"/><rect x="8" y="6" width="1" height="1" fill="#000"/><rect x="9" y="6" width="3" height="1" fill="#ff0"/><rect x="12" y="6" width="3" height="1" fill="#000"/><rect x="15" y="6" width="1" height="1" fill="#808080"/><rect x="16" y="6" width="1" height="1" fill="#000"/><rect x="0" y="7" width="1" height="1" fill="#808080"/><rect x="1" y="7" width="1" height="1" fill="#000"/><rect x="2" y="7" width="2" height="1" fill="#fff"/><rect x="4" y="7" width="1" height="1" fill="#000"/><rect x="5" y="7" width="1" height="1" fill="#fff"/><rect x="6" y="7" width="1" height="1" fill="#000"/><rect x="7" y="7" width="1" height="1" fill="#fff"/><rect x="8" y="7" width="1" height="1" fill="#000"/><rect x="9" y="7" width="1" height="1" fill="#fff"/><rect x="10" y="7" width="1" height="1" fill="#ff0"/><rect x="11" y="7" width="4" height="1" fill="#000"/><rect x="15" y="7" width="1" height="1" fill="#808080"/><rect x="16" y="7" width="1" height="1" fill="#000"/><rect x="0" y="8" width="1" height="1" fill="#808080"/><rect x="1" y="8" width="9" height="1" fill="#000"/><rect x="10" y="8" width="1" height="1" fill="#fff"/><rect x="11" y="8" width="1" height="1" fill="#ff0"/><rect x="12" y="8" width="3" height="1" fill="#000"/><rect x="15" y="8" width="1" height="1" fill="#808080"/><rect x="16" y="8" width="1" height="1" fill="#000"/><rect x="0" y="9" width="1" height="1" fill="#808080"/><rect x="1" y="9" width="1" height="1" fill="#000"/><rect x="2" y="9" width="2" height="1" fill="#fff"/><rect x="4" y="9" width="1" height="1" fill="#000"/><rect x="5" y="9" width="2" height="1" fill="#fff"/><rect x="7" y="9" width="5" height="1" fill="#000"/><rect x="12" y="9" width="2" height="1" fill="#fff"/><rect x="14" y="9" width="1" height="1" fill="#000"/><rect x="15" y="9" width="1" height="1" fill="#808080"/><rect x="16" y="9" width="1" height="1" fill="#000"/><rect x="0" y="10" width="1" height="1" fill="#808080"/><rect x="1" y="10" width="14" height="1" fill="#000"/><rect x="15" y="10" width="1" height="1" fill="#808080"/><rect x="16" y="10" width="1" height="1" fill="#000"/><rect x="0" y="11" width="1" height="1" fill="#808080"/><rect x="1" y="11" width="1" height="1" fill="#000"/><rect x="2" y="11" width="2" height="1" fill="#fff"/><rect x="4" y="11" width="1" height="1" fill="#000"/><rect x="5" y="11" width="7" height="1" fill="#fff"/><rect x="12" y="11" width="1" height="1" fill="#000"/><rect x="13" y="11" width="1" height="1" fill="#fff"/><rect x="14" y="11" width="1" height="1" fill="#000"/><rect x="15" y="11" width="1" height="1" fill="#808080"/><rect x="16" y="11" width="1" height="1" fill="#000"/><rect x="0" y="12" width="1" height="1" fill="#808080"/><rect x="1" y="12" width="1" height="1" fill="#000"/><rect x="2" y="12" width="2" height="1" fill="#fff"/><rect x="4" y="12" width="1" height="1" fill="#000"/><rect x="5" y="12" width="7" height="1" fill="#fff"/><rect x="12" y="12" width="1" height="1" fill="#000"/><rect x="13" y="12" width="1" height="1" fill="#fff"/><rect x="14" y="12" width="1" height="1" fill="#000"/><rect x="15" y="12" width="1" height="1" fill="#808080"/><rect x="16" y="12" width="1" height="1" fill="#000"/><rect x="0" y="13" width="1" height="1" fill="#808080"/><rect x="1" y="13" width="14" height="1" fill="#000"/><rect x="15" y="13" width="1" height="1" fill="#808080"/><rect x="16" y="13" width="1" height="1" fill="#000"/><rect x="0" y="14" width="16" height="1" fill="#808080"/><rect x="16" y="14" width="1" height="1" fill="#000"/><rect x="1" y="15" width="16" height="1" fill="#000"/></svg></div>
<div class="tb" style="left:260px"><svg width="17" height="17" viewBox="0 0 17 17" shape-rendering="crispEdges" style="position:absolute;left:4px;top:3px;"><rect x="0" y="0" width="2" height="1" fill="#f00"/><rect x="3" y="0" width="1" height="1" fill="#f00"/><rect x="0" y="1" width="2" height="1" fill="#f00"/><rect x="3" y="1" width="3" height="1" fill="#f00"/><rect x="0" y="2" width="2" height="1" fill="#f00"/><rect x="3" y="2" width="5" height="1" fill="#f00"/><rect x="0" y="3" width="2" height="1" fill="#f00"/><rect x="3" y="3" width="7" height="1" fill="#f00"/><rect x="0" y="4" width="2" height="1" fill="#f00"/><rect x="3" y="4" width="8" height="1" fill="#f00"/><rect x="0" y="5" width="2" height="1" fill="#f00"/><rect x="3" y="5" width="6" height="1" fill="#f00"/><rect x="0" y="6" width="2" height="1" fill="#f00"/><rect x="3" y="6" width="4" height="1" fill="#f00"/><rect x="0" y="7" width="2" height="1" fill="#f00"/><rect x="3" y="7" width="2" height="1" fill="#f00"/><rect x="6" y="7" width="11" height="1" fill="#000"/><rect x="4" y="8" width="1" height="1" fill="#ff0"/><rect x="5" y="8" width="1" height="1" fill="#ffff90"/><rect x="6" y="8" width="1" height="1" fill="#ff0"/><rect x="7" y="8" width="1" height="1" fill="#ffff90"/><rect x="8" y="8" width="1" height="1" fill="#ff0"/><rect x="9" y="8" width="1" height="1" fill="#ffff90"/><rect x="10" y="8" width="1" height="1" fill="#ff0"/><rect x="11" y="8" width="1" height="1" fill="#ffff90"/><rect x="12" y="8" width="1" height="1" fill="#ff0"/><rect x="13" y="8" width="1" height="1" fill="#ffff90"/><rect x="14" y="8" width="1" height="1" fill="#ff0"/><rect x="15" y="8" width="1" height="1" fill="#ffff90"/><rect x="16" y="8" width="1" height="1" fill="#000"/><rect x="4" y="9" width="1" height="1" fill="#ffff90"/><rect x="5" y="9" width="1" height="1" fill="#ff0"/><rect x="6" y="9" width="1" height="1" fill="#ffff90"/><rect x="7" y="9" width="1" height="1" fill="#ff0"/><rect x="8" y="9" width="1" height="1" fill="#ffff90"/><rect x="9" y="9" width="1" height="1" fill="#ff0"/><rect x="10" y="9" width="1" height="1" fill="#ffff90"/><rect x="11" y="9" width="1" height="1" fill="#ff0"/><rect x="12" y="9" width="1" height="1" fill="#ffff90"/><rect x="13" y="9" width="1" height="1" fill="#ff0"/><rect x="14" y="9" width="1" height="1" fill="#ffff90"/><rect x="15" y="9" width="1" height="1" fill="#ff0"/><rect x="16" y="9" width="1" height="1" fill="#000"/><rect x="3" y="10" width="1" height="1" fill="#000"/><rect x="4" y="10" width="1" height="1" fill="#ff0"/><rect x="5" y="10" width="1" height="1" fill="#ffff90"/><rect x="6" y="10" width="1" height="1" fill="#ff0"/><rect x="7" y="10" width="1" height="1" fill="#ffff90"/><rect x="8" y="10" width="1" height="1" fill="#ff0"/><rect x="9" y="10" width="1" height="1" fill="#ffff90"/><rect x="10" y="10" width="1" height="1" fill="#ff0"/><rect x="11" y="10" width="1" height="1" fill="#ffff90"/><rect x="12" y="10" width="1" height="1" fill="#ff0"/><rect x="13" y="10" width="1" height="1" fill="#ffff90"/><rect x="14" y="10" width="1" height="1" fill="#ff0"/><rect x="15" y="10" width="1" height="1" fill="#ffff90"/><rect x="16" y="10" width="1" height="1" fill="#000"/><rect x="3" y="11" width="1" height="1" fill="#000"/><rect x="4" y="11" width="1" height="1" fill="#ff0"/><rect x="5" y="11" width="4" height="1" fill="#000"/><rect x="9" y="11" width="1" height="1" fill="#ff0"/><rect x="10" y="11" width="4" height="1" fill="#000"/><rect x="14" y="11" width="1" height="1" fill="#ff0"/><rect x="15" y="11" width="1" height="1" fill="#fff"/><rect x="16" y="11" width="1" height="1" fill="#000"/><rect x="3" y="12" width="1" height="1" fill="#000"/><rect x="4" y="12" width="1" height="1" fill="#fff"/><rect x="5" y="12" width="1" height="1" fill="#000"/><rect x="6" y="12" width="2" height="1" fill="#fff"/><rect x="8" y="12" width="1" height="1" fill="#000"/><rect x="9" y="12" width="1" height="1" fill="#fff"/><rect x="10" y="12" width="1" height="1" fill="#000"/><rect x="11" y="12" width="2" height="1" fill="#fff"/><rect x="13" y="12" width="1" height="1" fill="#000"/><rect x="14" y="12" width="1" height="1" fill="#fff"/><rect x="15" y="12" width="1" height="1" fill="#ff0"/><rect x="16" y="12" width="1" height="1" fill="#000"/><rect x="3" y="13" width="1" height="1" fill="#000"/><rect x="4" y="13" width="1" height="1" fill="#ff0"/><rect x="5" y="13" width="1" height="1" fill="#000"/><rect x="6" y="13" width="2" height="1" fill="#fff"/><rect x="8" y="13" width="3" height="1" fill="#000"/><rect x="11" y="13" width="2" height="1" fill="#fff"/><rect x="13" y="13" width="1" height="1" fill="#000"/><rect x="14" y="13" width="1" height="1" fill="#ff0"/><rect x="15" y="13" width="1" height="1" fill="#fff"/><rect x="16" y="13" width="1" height="1" fill="#000"/><rect x="3" y="14" width="1" height="1" fill="#000"/><rect x="4" y="14" width="1" height="1" fill="#fff"/><rect x="5" y="14" width="4" height="1" fill="#000"/><rect x="9" y="14" width="1" height="1" fill="#ff0"/><rect x="10" y="14" width="4" height="1" fill="#000"/><rect x="14" y="14" width="1" height="1" fill="#fff"/><rect x="15" y="14" width="1" height="1" fill="#ff0"/><rect x="16" y="14" width="1" height="1" fill="#000"/><rect x="3" y="15" width="1" height="1" fill="#000"/><rect x="4" y="15" width="1" height="1" fill="#ff0"/><rect x="5" y="15" width="1" height="1" fill="#ffff90"/><rect x="6" y="15" width="1" height="1" fill="#ff0"/><rect x="7" y="15" width="1" height="1" fill="#ffff90"/><rect x="8" y="15" width="1" height="1" fill="#ff0"/><rect x="9" y="15" width="1" height="1" fill="#ffff90"/><rect x="10" y="15" width="1" height="1" fill="#ff0"/><rect x="11" y="15" width="1" height="1" fill="#ffff90"/><rect x="12" y="15" width="1" height="1" fill="#ff0"/><rect x="13" y="15" width="1" height="1" fill="#ffff90"/><rect x="14" y="15" width="1" height="1" fill="#ff0"/><rect x="15" y="15" width="1" height="1" fill="#ffff90"/><rect x="16" y="15" width="1" height="1" fill="#000"/><rect x="3" y="16" width="14" height="1" fill="#000"/></svg></div>
<div class="tb" style="left:287px"><svg width="17" height="16" viewBox="0 0 17 16" shape-rendering="crispEdges" style="position:absolute;left:4px;top:4px;"><rect x="0" y="0" width="7" height="1" fill="#f00"/><rect x="0" y="1" width="7" height="1" fill="#f00"/><rect x="0" y="2" width="7" height="1" fill="#f00"/><rect x="0" y="3" width="7" height="1" fill="#f00"/><rect x="0" y="4" width="7" height="1" fill="#f00"/><rect x="0" y="5" width="7" height="1" fill="#f00"/><rect x="0" y="6" width="7" height="1" fill="#f00"/><rect x="0" y="7" width="7" height="1" fill="#f00"/><rect x="8" y="7" width="9" height="1" fill="#000"/><rect x="4" y="8" width="1" height="1" fill="#ffff90"/><rect x="5" y="8" width="1" height="1" fill="#ff0"/><rect x="6" y="8" width="1" height="1" fill="#ffff90"/><rect x="7" y="8" width="1" height="1" fill="#ff0"/><rect x="8" y="8" width="1" height="1" fill="#ffff90"/><rect x="9" y="8" width="1" height="1" fill="#ff0"/><rect x="10" y="8" width="1" height="1" fill="#ffff90"/><rect x="11" y="8" width="1" height="1" fill="#ff0"/><rect x="12" y="8" width="1" height="1" fill="#ffff90"/><rect x="13" y="8" width="1" height="1" fill="#ff0"/><rect x="14" y="8" width="1" height="1" fill="#ffff90"/><rect x="15" y="8" width="1" height="1" fill="#ff0"/><rect x="16" y="8" width="1" height="1" fill="#000"/><rect x="3" y="9" width="1" height="1" fill="#000"/><rect x="4" y="9" width="1" height="1" fill="#ff0"/><rect x="5" y="9" width="1" height="1" fill="#ffff90"/><rect x="6" y="9" width="1" height="1" fill="#ff0"/><rect x="7" y="9" width="1" height="1" fill="#ffff90"/><rect x="8" y="9" width="1" height="1" fill="#ff0"/><rect x="9" y="9" width="1" height="1" fill="#ffff90"/><rect x="10" y="9" width="1" height="1" fill="#ff0"/><rect x="11" y="9" width="1" height="1" fill="#ffff90"/><rect x="12" y="9" width="1" height="1" fill="#ff0"/><rect x="13" y="9" width="1" height="1" fill="#ffff90"/><rect x="14" y="9" width="1" height="1" fill="#ff0"/><rect x="15" y="9" width="1" height="1" fill="#ffff90"/><rect x="16" y="9" width="1" height="1" fill="#000"/><rect x="3" y="10" width="1" height="1" fill="#000"/><rect x="4" y="10" width="1" height="1" fill="#ff0"/><rect x="5" y="10" width="4" height="1" fill="#000"/><rect x="9" y="10" width="1" height="1" fill="#ff0"/><rect x="10" y="10" width="4" height="1" fill="#000"/><rect x="14" y="10" width="1" height="1" fill="#ff0"/><rect x="15" y="10" width="1" height="1" fill="#fff"/><rect x="16" y="10" width="1" height="1" fill="#000"/><rect x="3" y="11" width="1" height="1" fill="#000"/><rect x="4" y="11" width="1" height="1" fill="#fff"/><rect x="5" y="11" width="1" height="1" fill="#000"/><rect x="6" y="11" width="2" height="1" fill="#fff"/><rect x="8" y="11" width="1" height="1" fill="#000"/><rect x="9" y="11" width="1" height="1" fill="#fff"/><rect x="10" y="11" width="1" height="1" fill="#000"/><rect x="11" y="11" width="2" height="1" fill="#fff"/><rect x="13" y="11" width="1" height="1" fill="#000"/><rect x="14" y="11" width="1" height="1" fill="#fff"/><rect x="15" y="11" width="1" height="1" fill="#ff0"/><rect x="16" y="11" width="1" height="1" fill="#000"/><rect x="3" y="12" width="1" height="1" fill="#000"/><rect x="4" y="12" width="1" height="1" fill="#ff0"/><rect x="5" y="12" width="1" height="1" fill="#000"/><rect x="6" y="12" width="2" height="1" fill="#fff"/><rect x="8" y="12" width="3" height="1" fill="#000"/><rect x="11" y="12" width="2" height="1" fill="#fff"/><rect x="13" y="12" width="1" height="1" fill="#000"/><rect x="14" y="12" width="1" height="1" fill="#ff0"/><rect x="15" y="12" width="1" height="1" fill="#fff"/><rect x="16" y="12" width="1" height="1" fill="#000"/><rect x="3" y="13" width="1" height="1" fill="#000"/><rect x="4" y="13" width="1" height="1" fill="#fff"/><rect x="5" y="13" width="4" height="1" fill="#000"/><rect x="9" y="13" width="1" height="1" fill="#ff0"/><rect x="10" y="13" width="4" height="1" fill="#000"/><rect x="14" y="13" width="1" height="1" fill="#fff"/><rect x="15" y="13" width="1" height="1" fill="#ff0"/><rect x="16" y="13" width="1" height="1" fill="#000"/><rect x="3" y="14" width="1" height="1" fill="#000"/><rect x="4" y="14" width="1" height="1" fill="#ff0"/><rect x="5" y="14" width="1" height="1" fill="#ffff90"/><rect x="6" y="14" width="1" height="1" fill="#ff0"/><rect x="7" y="14" width="1" height="1" fill="#ffff90"/><rect x="8" y="14" width="1" height="1" fill="#ff0"/><rect x="9" y="14" width="1" height="1" fill="#ffff90"/><rect x="10" y="14" width="1" height="1" fill="#ff0"/><rect x="11" y="14" width="1" height="1" fill="#ffff90"/><rect x="12" y="14" width="1" height="1" fill="#ff0"/><rect x="13" y="14" width="1" height="1" fill="#ffff90"/><rect x="14" y="14" width="1" height="1" fill="#ff0"/><rect x="15" y="14" width="1" height="1" fill="#ffff90"/><rect x="16" y="14" width="1" height="1" fill="#000"/><rect x="3" y="15" width="14" height="1" fill="#000"/></svg></div>
<div class="tb" style="left:322px"><svg width="17" height="16" viewBox="0 0 17 16" shape-rendering="crispEdges" style="position:absolute;left:4px;top:4px;"><rect x="6" y="0" width="2" height="1" fill="#000"/><rect x="14" y="0" width="2" height="1" fill="#000"/><rect x="6" y="1" width="4" height="1" fill="#000"/><rect x="14" y="1" width="2" height="1" fill="#000"/><rect x="6" y="2" width="6" height="1" fill="#000"/><rect x="14" y="2" width="2" height="1" fill="#000"/><rect x="6" y="3" width="10" height="1" fill="#000"/><rect x="6" y="4" width="6" height="1" fill="#000"/><rect x="14" y="4" width="2" height="1" fill="#000"/><rect x="6" y="5" width="4" height="1" fill="#000"/><rect x="14" y="5" width="2" height="1" fill="#000"/><rect x="6" y="6" width="2" height="1" fill="#000"/><rect x="14" y="6" width="2" height="1" fill="#000"/><rect x="0" y="7" width="14" height="1" fill="#000"/><rect x="0" y="8" width="1" height="1" fill="#000"/><rect x="1" y="8" width="1" height="1" fill="#ff0"/><rect x="2" y="8" width="1" height="1" fill="#ffff90"/><rect x="3" y="8" width="1" height="1" fill="#ff0"/><rect x="4" y="8" width="1" height="1" fill="#ffff90"/><rect x="5" y="8" width="1" height="1" fill="#ff0"/><rect x="6" y="8" width="1" height="1" fill="#ffff90"/><rect x="7" y="8" width="1" height="1" fill="#ff0"/><rect x="8" y="8" width="1" height="1" fill="#ffff90"/><rect x="9" y="8" width="1" height="1" fill="#ff0"/><rect x="10" y="8" width="1" height="1" fill="#ffff90"/><rect x="11" y="8" width="1" height="1" fill="#ff0"/><rect x="12" y="8" width="1" height="1" fill="#ffff90"/><rect x="13" y="8" width="1" height="1" fill="#000"/><rect x="0" y="9" width="1" height="1" fill="#000"/><rect x="1" y="9" width="1" height="1" fill="#ffff90"/><rect x="2" y="9" width="1" height="1" fill="#ff0"/><rect x="3" y="9" width="1" height="1" fill="#ffff90"/><rect x="4" y="9" width="1" height="1" fill="#ff0"/><rect x="5" y="9" width="1" height="1" fill="#ffff90"/><rect x="6" y="9" width="1" height="1" fill="#ff0"/><rect x="7" y="9" width="1" height="1" fill="#ffff90"/><rect x="8" y="9" width="1" height="1" fill="#ff0"/><rect x="9" y="9" width="1" height="1" fill="#ffff90"/><rect x="10" y="9" width="1" height="1" fill="#ff0"/><rect x="11" y="9" width="1" height="1" fill="#ffff90"/><rect x="12" y="9" width="1" height="1" fill="#ff0"/><rect x="13" y="9" width="1" height="1" fill="#000"/><rect x="0" y="10" width="1" height="1" fill="#000"/><rect x="1" y="10" width="1" height="1" fill="#ff0"/><rect x="2" y="10" width="4" height="1" fill="#000"/><rect x="6" y="10" width="1" height="1" fill="#ff0"/><rect x="7" y="10" width="4" height="1" fill="#000"/><rect x="11" y="10" width="1" height="1" fill="#ff0"/><rect x="12" y="10" width="1" height="1" fill="#fff"/><rect x="13" y="10" width="1" height="1" fill="#000"/><rect x="0" y="11" width="1" height="1" fill="#000"/><rect x="1" y="11" width="1" height="1" fill="#fff"/><rect x="2" y="11" width="1" height="1" fill="#000"/><rect x="3" y="11" width="2" height="1" fill="#fff"/><rect x="5" y="11" width="1" height="1" fill="#000"/><rect x="6" y="11" width="1" height="1" fill="#fff"/><rect x="7" y="11" width="1" height="1" fill="#000"/><rect x="8" y="11" width="2" height="1" fill="#fff"/><rect x="10" y="11" width="1" height="1" fill="#000"/><rect x="11" y="11" width="1" height="1" fill="#fff"/><rect x="12" y="11" width="1" height="1" fill="#ff0"/><rect x="13" y="11" width="1" height="1" fill="#000"/><rect x="0" y="12" width="1" height="1" fill="#000"/><rect x="1" y="12" width="1" height="1" fill="#ff0"/><rect x="2" y="12" width="1" height="1" fill="#000"/><rect x="3" y="12" width="2" height="1" fill="#fff"/><rect x="5" y="12" width="3" height="1" fill="#000"/><rect x="8" y="12" width="2" height="1" fill="#fff"/><rect x="10" y="12" width="1" height="1" fill="#000"/><rect x="11" y="12" width="1" height="1" fill="#ff0"/><rect x="12" y="12" width="1" height="1" fill="#fff"/><rect x="13" y="12" width="1" height="1" fill="#000"/><rect x="0" y="13" width="1" height="1" fill="#000"/><rect x="1" y="13" width="1" height="1" fill="#fff"/><rect x="2" y="13" width="4" height="1" fill="#000"/><rect x="6" y="13" width="1" height="1" fill="#ff0"/><rect x="7" y="13" width="4" height="1" fill="#000"/><rect x="11" y="13" width="1" height="1" fill="#fff"/><rect x="12" y="13" width="1" height="1" fill="#ff0"/><rect x="13" y="13" width="1" height="1" fill="#000"/><rect x="0" y="14" width="1" height="1" fill="#000"/><rect x="1" y="14" width="1" height="1" fill="#ff0"/><rect x="2" y="14" width="1" height="1" fill="#ffff90"/><rect x="3" y="14" width="1" height="1" fill="#ff0"/><rect x="4" y="14" width="1" height="1" fill="#ffff90"/><rect x="5" y="14" width="1" height="1" fill="#ff0"/><rect x="6" y="14" width="1" height="1" fill="#ffff90"/><rect x="7" y="14" width="1" height="1" fill="#ff0"/><rect x="8" y="14" width="1" height="1" fill="#ffff90"/><rect x="9" y="14" width="1" height="1" fill="#ff0"/><rect x="10" y="14" width="1" height="1" fill="#ffff90"/><rect x="11" y="14" width="1" height="1" fill="#ff0"/><rect x="12" y="14" width="1" height="1" fill="#ffff90"/><rect x="13" y="14" width="1" height="1" fill="#000"/><rect x="0" y="15" width="14" height="1" fill="#000"/></svg></div>
<div class="tb" style="left:349px"><svg width="16" height="16" viewBox="0 0 16 16" shape-rendering="crispEdges" style="position:absolute;left:4px;top:4px;"><rect x="9" y="0" width="7" height="1" fill="#000"/><rect x="9" y="1" width="7" height="1" fill="#000"/><rect x="9" y="2" width="7" height="1" fill="#000"/><rect x="9" y="3" width="7" height="1" fill="#000"/><rect x="9" y="4" width="7" height="1" fill="#000"/><rect x="9" y="5" width="7" height="1" fill="#000"/><rect x="9" y="6" width="7" height="1" fill="#000"/><rect x="0" y="7" width="8" height="1" fill="#000"/><rect x="0" y="8" width="1" height="1" fill="#000"/><rect x="1" y="8" width="1" height="1" fill="#ff0"/><rect x="2" y="8" width="1" height="1" fill="#ffff90"/><rect x="3" y="8" width="1" height="1" fill="#ff0"/><rect x="4" y="8" width="1" height="1" fill="#ffff90"/><rect x="5" y="8" width="1" height="1" fill="#ff0"/><rect x="6" y="8" width="1" height="1" fill="#ffff90"/><rect x="7" y="8" width="1" height="1" fill="#ff0"/><rect x="8" y="8" width="1" height="1" fill="#ffff90"/><rect x="9" y="8" width="1" height="1" fill="#ff0"/><rect x="10" y="8" width="1" height="1" fill="#ffff90"/><rect x="11" y="8" width="1" height="1" fill="#ff0"/><rect x="12" y="8" width="1" height="1" fill="#ffff90"/><rect x="0" y="9" width="1" height="1" fill="#000"/><rect x="1" y="9" width="1" height="1" fill="#ffff90"/><rect x="2" y="9" width="1" height="1" fill="#ff0"/><rect x="3" y="9" width="1" height="1" fill="#ffff90"/><rect x="4" y="9" width="1" height="1" fill="#ff0"/><rect x="5" y="9" width="1" height="1" fill="#ffff90"/><rect x="6" y="9" width="1" height="1" fill="#ff0"/><rect x="7" y="9" width="1" height="1" fill="#ffff90"/><rect x="8" y="9" width="1" height="1" fill="#ff0"/><rect x="9" y="9" width="1" height="1" fill="#ffff90"/><rect x="10" y="9" width="1" height="1" fill="#ff0"/><rect x="11" y="9" width="1" height="1" fill="#ffff90"/><rect x="12" y="9" width="1" height="1" fill="#ff0"/><rect x="13" y="9" width="1" height="1" fill="#000"/><rect x="0" y="10" width="1" height="1" fill="#000"/><rect x="1" y="10" width="1" height="1" fill="#ff0"/><rect x="2" y="10" width="4" height="1" fill="#000"/><rect x="6" y="10" width="1" height="1" fill="#ff0"/><rect x="7" y="10" width="4" height="1" fill="#000"/><rect x="11" y="10" width="1" height="1" fill="#ff0"/><rect x="12" y="10" width="1" height="1" fill="#fff"/><rect x="13" y="10" width="1" height="1" fill="#000"/><rect x="0" y="11" width="1" height="1" fill="#000"/><rect x="1" y="11" width="1" height="1" fill="#fff"/><rect x="2" y="11" width="1" height="1" fill="#000"/><rect x="3" y="11" width="2" height="1" fill="#fff"/><rect x="5" y="11" width="1" height="1" fill="#000"/><rect x="6" y="11" width="1" height="1" fill="#fff"/><rect x="7" y="11" width="1" height="1" fill="#000"/><rect x="8" y="11" width="2" height="1" fill="#fff"/><rect x="10" y="11" width="1" height="1" fill="#000"/><rect x="11" y="11" width="1" height="1" fill="#fff"/><rect x="12" y="11" width="1" height="1" fill="#ff0"/><rect x="13" y="11" width="1" height="1" fill="#000"/><rect x="0" y="12" width="1" height="1" fill="#000"/><rect x="1" y="12" width="1" height="1" fill="#ff0"/><rect x="2" y="12" width="1" height="1" fill="#000"/><rect x="3" y="12" width="2" height="1" fill="#fff"/><rect x="5" y="12" width="3" height="1" fill="#000"/><rect x="8" y="12" width="2" height="1" fill="#fff"/><rect x="10" y="12" width="1" height="1" fill="#000"/><rect x="11" y="12" width="1" height="1" fill="#ff0"/><rect x="12" y="12" width="1" height="1" fill="#fff"/><rect x="13" y="12" width="1" height="1" fill="#000"/><rect x="0" y="13" width="1" height="1" fill="#000"/><rect x="1" y="13" width="1" height="1" fill="#fff"/><rect x="2" y="13" width="4" height="1" fill="#000"/><rect x="6" y="13" width="1" height="1" fill="#ff0"/><rect x="7" y="13" width="4" height="1" fill="#000"/><rect x="11" y="13" width="1" height="1" fill="#fff"/><rect x="12" y="13" width="1" height="1" fill="#ff0"/><rect x="13" y="13" width="1" height="1" fill="#000"/><rect x="0" y="14" width="1" height="1" fill="#000"/><rect x="1" y="14" width="1" height="1" fill="#ff0"/><rect x="2" y="14" width="1" height="1" fill="#ffff90"/><rect x="3" y="14" width="1" height="1" fill="#ff0"/><rect x="4" y="14" width="1" height="1" fill="#ffff90"/><rect x="5" y="14" width="1" height="1" fill="#ff0"/><rect x="6" y="14" width="1" height="1" fill="#ffff90"/><rect x="7" y="14" width="1" height="1" fill="#ff0"/><rect x="8" y="14" width="1" height="1" fill="#ffff90"/><rect x="9" y="14" width="1" height="1" fill="#ff0"/><rect x="10" y="14" width="1" height="1" fill="#ffff90"/><rect x="11" y="14" width="1" height="1" fill="#ff0"/><rect x="12" y="14" width="1" height="1" fill="#ffff90"/><rect x="13" y="14" width="1" height="1" fill="#000"/><rect x="0" y="15" width="14" height="1" fill="#000"/></svg></div>
<div class="tb" style="left:384px"><svg width="13" height="17" viewBox="0 0 13 17" shape-rendering="crispEdges" style="position:absolute;left:6px;top:3px;"><rect x="4" y="0" width="5" height="1" fill="#000"/><rect x="0" y="1" width="4" height="1" fill="#000"/><rect x="4" y="1" width="1" height="1" fill="#c0c0c0"/><rect x="5" y="1" width="2" height="1" fill="#fff"/><rect x="7" y="1" width="1" height="1" fill="#c0c0c0"/><rect x="8" y="1" width="5" height="1" fill="#000"/><rect x="0" y="2" width="4" height="1" fill="#ff0"/><rect x="4" y="2" width="1" height="1" fill="#c0c0c0"/><rect x="5" y="2" width="2" height="1" fill="#fff"/><rect x="7" y="2" width="1" height="1" fill="#c0c0c0"/><rect x="8" y="2" width="1" height="1" fill="#000"/><rect x="9" y="2" width="3" height="1" fill="#ff0"/><rect x="12" y="2" width="1" height="1" fill="#000"/><rect x="0" y="3" width="1" height="1" fill="#ff0"/><rect x="1" y="3" width="3" height="1" fill="#000"/><rect x="4" y="3" width="4" height="1" fill="#c0c0c0"/><rect x="8" y="3" width="5" height="1" fill="#000"/><rect x="0" y="4" width="1" height="1" fill="#ff0"/><rect x="1" y="4" width="2" height="1" fill="#fff"/><rect x="3" y="4" width="1" height="1" fill="#008080"/><rect x="4" y="4" width="7" height="1" fill="#fff"/><rect x="11" y="4" width="2" height="1" fill="#000"/><rect x="0" y="5" width="1" height="1" fill="#ff0"/><rect x="1" y="5" width="2" height="1" fill="#fff"/><rect x="3" y="5" width="1" height="1" fill="#008080"/><rect x="4" y="5" width="7" height="1" fill="#fff"/><rect x="11" y="5" width="2" height="1" fill="#000"/><rect x="0" y="6" width="1" height="1" fill="#ff0"/><rect x="1" y="6" width="10" height="1" fill="#008080"/><rect x="11" y="6" width="2" height="1" fill="#000"/><rect x="0" y="7" width="1" height="1" fill="#ff0"/><rect x="1" y="7" width="10" height="1" fill="#008080"/><rect x="11" y="7" width="2" height="1" fill="#000"/><rect x="0" y="8" width="1" height="1" fill="#ff0"/><rect x="1" y="8" width="2" height="1" fill="#fff"/><rect x="3" y="8" width="1" height="1" fill="#008080"/><rect x="4" y="8" width="7" height="1" fill="#fff"/><rect x="11" y="8" width="2" height="1" fill="#000"/><rect x="0" y="9" width="1" height="1" fill="#ff0"/><rect x="1" y="9" width="10" height="1" fill="#008080"/><rect x="11" y="9" width="2" height="1" fill="#000"/><rect x="0" y="10" width="1" height="1" fill="#ff0"/><rect x="1" y="10" width="2" height="1" fill="#fff"/><rect x="3" y="10" width="1" height="1" fill="#008080"/><rect x="4" y="10" width="7" height="1" fill="#fff"/><rect x="11" y="10" width="2" height="1" fill="#000"/><rect x="0" y="11" width="1" height="1" fill="#ff0"/><rect x="1" y="11" width="10" height="1" fill="#008080"/><rect x="11" y="11" width="2" height="1" fill="#000"/><rect x="0" y="12" width="1" height="1" fill="#ff0"/><rect x="1" y="12" width="10" height="1" fill="#008080"/><rect x="11" y="12" width="2" height="1" fill="#000"/><rect x="0" y="13" width="1" height="1" fill="#ff0"/><rect x="1" y="13" width="2" height="1" fill="#fff"/><rect x="3" y="13" width="1" height="1" fill="#008080"/><rect x="4" y="13" width="7" height="1" fill="#fff"/><rect x="11" y="13" width="2" height="1" fill="#000"/><rect x="0" y="14" width="1" height="1" fill="#ff0"/><rect x="1" y="14" width="12" height="1" fill="#000"/><rect x="0" y="15" width="1" height="1" fill="#ff0"/><rect x="1" y="15" width="11" height="1" fill="#808000"/><rect x="12" y="15" width="1" height="1" fill="#000"/><rect x="1" y="16" width="12" height="1" fill="#000"/></svg></div>
<div class="tb" style="left:419px"><svg width="18" height="18" viewBox="0 0 18 18" shape-rendering="crispEdges" style="position:absolute;left:3px;top:3px;"><rect x="6" y="0" width="6" height="1" fill="#000"/><rect x="4" y="1" width="2" height="1" fill="#000"/><rect x="6" y="1" width="1" height="1" fill="#00f"/><rect x="7" y="1" width="3" height="1" fill="#008000"/><rect x="10" y="1" width="4" height="1" fill="#000"/><rect x="3" y="2" width="1" height="1" fill="#000"/><rect x="4" y="2" width="1" height="1" fill="#00f"/><rect x="5" y="2" width="1" height="1" fill="#fff"/><rect x="6" y="2" width="4" height="1" fill="#008000"/><rect x="10" y="2" width="2" height="1" fill="#00f"/><rect x="12" y="2" width="2" height="1" fill="#008000"/><rect x="14" y="2" width="1" height="1" fill="#000"/><rect x="2" y="3" width="1" height="1" fill="#000"/><rect x="3" y="3" width="2" height="1" fill="#00f"/><rect x="5" y="3" width="5" height="1" fill="#008000"/><rect x="10" y="3" width="2" height="1" fill="#00f"/><rect x="12" y="3" width="4" height="1" fill="#000"/><rect x="1" y="4" width="1" height="1" fill="#000"/><rect x="2" y="4" width="2" height="1" fill="#00f"/><rect x="4" y="4" width="6" height="1" fill="#008000"/><rect x="10" y="4" width="2" height="1" fill="#00f"/><rect x="12" y="4" width="1" height="1" fill="#00c000"/><rect x="13" y="4" width="1" height="1" fill="#0f0"/><rect x="14" y="4" width="2" height="1" fill="#00c000"/><rect x="16" y="4" width="1" height="1" fill="#000"/><rect x="1" y="5" width="1" height="1" fill="#000"/><rect x="2" y="5" width="1" height="1" fill="#00f"/><rect x="3" y="5" width="1" height="1" fill="#fff"/><rect x="4" y="5" width="6" height="1" fill="#008000"/><rect x="10" y="5" width="1" height="1" fill="#000"/><rect x="11" y="5" width="1" height="1" fill="#0f0"/><rect x="12" y="5" width="1" height="1" fill="#00c000"/><rect x="13" y="5" width="2" height="1" fill="#000"/><rect x="15" y="5" width="1" height="1" fill="#0f0"/><rect x="16" y="5" width="1" height="1" fill="#00c000"/><rect x="17" y="5" width="1" height="1" fill="#000"/><rect x="1" y="6" width="1" height="1" fill="#000"/><rect x="2" y="6" width="2" height="1" fill="#00f"/><rect x="4" y="6" width="6" height="1" fill="#008000"/><rect x="10" y="6" width="1" height="1" fill="#0f0"/><rect x="11" y="6" width="1" height="1" fill="#00c000"/><rect x="12" y="6" width="3" height="1" fill="#000"/><rect x="15" y="6" width="1" height="1" fill="#0f0"/><rect x="16" y="6" width="1" height="1" fill="#00c000"/><rect x="17" y="6" width="1" height="1" fill="#000"/><rect x="0" y="7" width="1" height="1" fill="#000"/><rect x="1" y="7" width="4" height="1" fill="#00f"/><rect x="5" y="7" width="5" height="1" fill="#008000"/><rect x="10" y="7" width="1" height="1" fill="#0f0"/><rect x="11" y="7" width="1" height="1" fill="#00c000"/><rect x="12" y="7" width="2" height="1" fill="#00f"/><rect x="14" y="7" width="1" height="1" fill="#000"/><rect x="15" y="7" width="1" height="1" fill="#0f0"/><rect x="16" y="7" width="1" height="1" fill="#00c000"/><rect x="17" y="7" width="1" height="1" fill="#000"/><rect x="0" y="8" width="1" height="1" fill="#000"/><rect x="1" y="8" width="4" height="1" fill="#00f"/><rect x="5" y="8" width="6" height="1" fill="#008000"/><rect x="11" y="8" width="1" height="1" fill="#000"/><rect x="12" y="8" width="2" height="1" fill="#00f"/><rect x="14" y="8" width="1" height="1" fill="#000"/><rect x="15" y="8" width="1" height="1" fill="#0f0"/><rect x="16" y="8" width="1" height="1" fill="#00c000"/><rect x="17" y="8" width="1" height="1" fill="#000"/><rect x="0" y="9" width="1" height="1" fill="#000"/><rect x="1" y="9" width="4" height="1" fill="#00f"/><rect x="5" y="9" width="6" height="1" fill="#008000"/><rect x="11" y="9" width="1" height="1" fill="#000"/><rect x="12" y="9" width="2" height="1" fill="#00f"/><rect x="14" y="9" width="1" height="1" fill="#0f0"/><rect x="15" y="9" width="1" height="1" fill="#00c000"/><rect x="16" y="9" width="2" height="1" fill="#000"/><rect x="0" y="10" width="1" height="1" fill="#000"/><rect x="1" y="10" width="4" height="1" fill="#00f"/><rect x="5" y="10" width="6" height="1" fill="#008000"/><rect x="11" y="10" width="2" height="1" fill="#000"/><rect x="13" y="10" width="1" height="1" fill="#0f0"/><rect x="14" y="10" width="1" height="1" fill="#00c000"/><rect x="15" y="10" width="3" height="1" fill="#000"/><rect x="0" y="11" width="1" height="1" fill="#000"/><rect x="1" y="11" width="4" height="1" fill="#00f"/><rect x="5" y="11" width="6" height="1" fill="#008000"/><rect x="11" y="11" width="2" height="1" fill="#000"/><rect x="13" y="11" width="1" height="1" fill="#0f0"/><rect x="14" y="11" width="1" height="1" fill="#00c000"/><rect x="15" y="11" width="1" height="1" fill="#000"/><rect x="16" y="11" width="1" height="1" fill="#00f"/><rect x="17" y="11" width="1" height="1" fill="#000"/><rect x="1" y="12" width="1" height="1" fill="#000"/><rect x="2" y="12" width="6" height="1" fill="#00f"/><rect x="8" y="12" width="3" height="1" fill="#008000"/><rect x="11" y="12" width="2" height="1" fill="#00f"/><rect x="13" y="12" width="1" height="1" fill="#0f0"/><rect x="14" y="12" width="1" height="1" fill="#00c000"/><rect x="15" y="12" width="2" height="1" fill="#000"/><rect x="1" y="13" width="1" height="1" fill="#000"/><rect x="2" y="13" width="6" height="1" fill="#00f"/><rect x="8" y="13" width="1" height="1" fill="#fff"/><rect x="9" y="13" width="2" height="1" fill="#008000"/><rect x="11" y="13" width="2" height="1" fill="#00f"/><rect x="13" y="13" width="2" height="1" fill="#000"/><rect x="15" y="13" width="1" height="1" fill="#00f"/><rect x="16" y="13" width="1" height="1" fill="#000"/><rect x="1" y="14" width="2" height="1" fill="#000"/><rect x="3" y="14" width="5" height="1" fill="#00f"/><rect x="8" y="14" width="3" height="1" fill="#008000"/><rect x="11" y="14" width="2" height="1" fill="#00f"/><rect x="13" y="14" width="4" height="1" fill="#000"/><rect x="2" y="15" width="2" height="1" fill="#000"/><rect x="4" y="15" width="4" height="1" fill="#00f"/><rect x="8" y="15" width="1" height="1" fill="#fff"/><rect x="9" y="15" width="2" height="1" fill="#008000"/><rect x="11" y="15" width="2" height="1" fill="#00f"/><rect x="13" y="15" width="1" height="1" fill="#0f0"/><rect x="14" y="15" width="1" height="1" fill="#00c000"/><rect x="15" y="15" width="1" height="1" fill="#000"/><rect x="3" y="16" width="3" height="1" fill="#000"/><rect x="6" y="16" width="5" height="1" fill="#00f"/><rect x="11" y="16" width="2" height="1" fill="#000"/><rect x="13" y="16" width="1" height="1" fill="#0f0"/><rect x="14" y="16" width="1" height="1" fill="#00c000"/><rect x="15" y="16" width="1" height="1" fill="#000"/><rect x="6" y="17" width="8" height="1" fill="#000"/></svg></div>
<div class="tb" style="left:446px"><svg width="18" height="18" viewBox="0 0 18 18" shape-rendering="crispEdges" style="position:absolute;left:3px;top:3px;"><rect x="2" y="0" width="13" height="1" fill="#000"/><rect x="2" y="1" width="1" height="1" fill="#000"/><rect x="3" y="1" width="4" height="1" fill="#808000"/><rect x="7" y="1" width="5" height="1" fill="#000"/><rect x="12" y="1" width="3" height="1" fill="#808000"/><rect x="15" y="1" width="2" height="1" fill="#000"/><rect x="0" y="2" width="3" height="1" fill="#000"/><rect x="3" y="2" width="3" height="1" fill="#808000"/><rect x="6" y="2" width="1" height="1" fill="#000"/><rect x="7" y="2" width="4" height="1" fill="#0f0"/><rect x="11" y="2" width="1" height="1" fill="#000"/><rect x="12" y="2" width="2" height="1" fill="#808000"/><rect x="14" y="2" width="1" height="1" fill="#000"/><rect x="15" y="2" width="1" height="1" fill="#fff"/><rect x="16" y="2" width="1" height="1" fill="#ff0"/><rect x="17" y="2" width="1" height="1" fill="#000"/><rect x="2" y="3" width="1" height="1" fill="#fff"/><rect x="3" y="3" width="1" height="1" fill="#808000"/><rect x="4" y="3" width="1" height="1" fill="#000"/><rect x="5" y="3" width="7" height="1" fill="#0f0"/><rect x="12" y="3" width="1" height="1" fill="#000"/><rect x="13" y="3" width="1" height="1" fill="#808000"/><rect x="14" y="3" width="1" height="1" fill="#000"/><rect x="15" y="3" width="2" height="1" fill="#fff"/><rect x="17" y="3" width="1" height="1" fill="#000"/><rect x="2" y="4" width="1" height="1" fill="#000"/><rect x="3" y="4" width="1" height="1" fill="#808000"/><rect x="4" y="4" width="1" height="1" fill="#000"/><rect x="5" y="4" width="2" height="1" fill="#0f0"/><rect x="7" y="4" width="3" height="1" fill="#000"/><rect x="10" y="4" width="1" height="1" fill="#0f0"/><rect x="11" y="4" width="1" height="1" fill="#00c000"/><rect x="12" y="4" width="1" height="1" fill="#000"/><rect x="13" y="4" width="1" height="1" fill="#808000"/><rect x="14" y="4" width="1" height="1" fill="#000"/><rect x="15" y="4" width="1" height="1" fill="#fff"/><rect x="16" y="4" width="1" height="1" fill="#ff0"/><rect x="17" y="4" width="1" height="1" fill="#000"/><rect x="0" y="5" width="3" height="1" fill="#000"/><rect x="3" y="5" width="1" height="1" fill="#808000"/><rect x="4" y="5" width="1" height="1" fill="#000"/><rect x="5" y="5" width="1" height="1" fill="#0f0"/><rect x="6" y="5" width="1" height="1" fill="#00c000"/><rect x="7" y="5" width="1" height="1" fill="#000"/><rect x="8" y="5" width="1" height="1" fill="#808000"/><rect x="9" y="5" width="1" height="1" fill="#000"/><rect x="10" y="5" width="1" height="1" fill="#0f0"/><rect x="11" y="5" width="1" height="1" fill="#00c000"/><rect x="12" y="5" width="1" height="1" fill="#000"/><rect x="13" y="5" width="1" height="1" fill="#808000"/><rect x="14" y="5" width="1" height="1" fill="#000"/><rect x="15" y="5" width="2" height="1" fill="#fff"/><rect x="17" y="5" width="1" height="1" fill="#000"/><rect x="2" y="6" width="1" height="1" fill="#000"/><rect x="3" y="6" width="1" height="1" fill="#808000"/><rect x="4" y="6" width="5" height="1" fill="#000"/><rect x="9" y="6" width="2" height="1" fill="#0f0"/><rect x="11" y="6" width="1" height="1" fill="#00c000"/><rect x="12" y="6" width="1" height="1" fill="#000"/><rect x="13" y="6" width="1" height="1" fill="#808000"/><rect x="14" y="6" width="1" height="1" fill="#000"/><rect x="15" y="6" width="1" height="1" fill="#fff"/><rect x="16" y="6" width="1" height="1" fill="#ff0"/><rect x="17" y="6" width="1" height="1" fill="#000"/><rect x="0" y="7" width="3" height="1" fill="#000"/><rect x="3" y="7" width="4" height="1" fill="#808000"/><rect x="7" y="7" width="1" height="1" fill="#000"/><rect x="8" y="7" width="2" height="1" fill="#0f0"/><rect x="10" y="7" width="1" height="1" fill="#00c000"/><rect x="11" y="7" width="1" height="1" fill="#000"/><rect x="12" y="7" width="2" height="1" fill="#808000"/><rect x="14" y="7" width="1" height="1" fill="#000"/><rect x="15" y="7" width="1" height="1" fill="#fff"/><rect x="16" y="7" width="2" height="1" fill="#000"/><rect x="2" y="8" width="1" height="1" fill="#fff"/><rect x="3" y="8" width="4" height="1" fill="#808000"/><rect x="7" y="8" width="1" height="1" fill="#000"/><rect x="8" y="8" width="1" height="1" fill="#0f0"/><rect x="9" y="8" width="1" height="1" fill="#00c000"/><rect x="10" y="8" width="1" height="1" fill="#000"/><rect x="11" y="8" width="3" height="1" fill="#808000"/><rect x="14" y="8" width="1" height="1" fill="#000"/><rect x="15" y="8" width="1" height="1" fill="#fff"/><rect x="16" y="8" width="1" height="1" fill="#ff0"/><rect x="17" y="8" width="1" height="1" fill="#000"/><rect x="2" y="9" width="1" height="1" fill="#000"/><rect x="3" y="9" width="4" height="1" fill="#808000"/><rect x="7" y="9" width="1" height="1" fill="#000"/><rect x="8" y="9" width="1" height="1" fill="#0f0"/><rect x="9" y="9" width="1" height="1" fill="#00c000"/><rect x="10" y="9" width="1" height="1" fill="#000"/><rect x="11" y="9" width="3" height="1" fill="#808000"/><rect x="14" y="9" width="1" height="1" fill="#000"/><rect x="15" y="9" width="2" height="1" fill="#fff"/><rect x="17" y="9" width="1" height="1" fill="#000"/><rect x="0" y="10" width="3" height="1" fill="#000"/><rect x="3" y="10" width="4" height="1" fill="#808000"/><rect x="7" y="10" width="1" height="1" fill="#000"/><rect x="8" y="10" width="2" height="1" fill="#00c000"/><rect x="10" y="10" width="1" height="1" fill="#000"/><rect x="11" y="10" width="3" height="1" fill="#808000"/><rect x="14" y="10" width="1" height="1" fill="#000"/><rect x="15" y="10" width="1" height="1" fill="#fff"/><rect x="16" y="10" width="1" height="1" fill="#ff0"/><rect x="17" y="10" width="1" height="1" fill="#000"/><rect x="2" y="11" width="1" height="1" fill="#000"/><rect x="3" y="11" width="4" height="1" fill="#808000"/><rect x="7" y="11" width="4" height="1" fill="#000"/><rect x="11" y="11" width="3" height="1" fill="#808000"/><rect x="14" y="11" width="1" height="1" fill="#000"/><rect x="15" y="11" width="2" height="1" fill="#fff"/><rect x="17" y="11" width="1" height="1" fill="#000"/><rect x="0" y="12" width="3" height="1" fill="#000"/><rect x="3" y="12" width="4" height="1" fill="#808000"/><rect x="7" y="12" width="1" height="1" fill="#000"/><rect x="8" y="12" width="1" height="1" fill="#0f0"/><rect x="9" y="12" width="1" height="1" fill="#00c000"/><rect x="10" y="12" width="1" height="1" fill="#000"/><rect x="11" y="12" width="3" height="1" fill="#808000"/><rect x="14" y="12" width="1" height="1" fill="#000"/><rect x="15" y="12" width="1" height="1" fill="#fff"/><rect x="16" y="12" width="1" height="1" fill="#ff0"/><rect x="17" y="12" width="1" height="1" fill="#000"/><rect x="2" y="13" width="1" height="1" fill="#fff"/><rect x="3" y="13" width="4" height="1" fill="#808000"/><rect x="7" y="13" width="1" height="1" fill="#000"/><rect x="8" y="13" width="1" height="1" fill="#0f0"/><rect x="9" y="13" width="1" height="1" fill="#00c000"/><rect x="10" y="13" width="1" height="1" fill="#000"/><rect x="11" y="13" width="3" height="1" fill="#808000"/><rect x="14" y="13" width="1" height="1" fill="#000"/><rect x="15" y="13" width="1" height="1" fill="#fff"/><rect x="16" y="13" width="2" height="1" fill="#000"/><rect x="2" y="14" width="1" height="1" fill="#000"/><rect x="3" y="14" width="4" height="1" fill="#808000"/><rect x="7" y="14" width="1" height="1" fill="#000"/><rect x="8" y="14" width="2" height="1" fill="#00c000"/><rect x="10" y="14" width="1" height="1" fill="#000"/><rect x="11" y="14" width="3" height="1" fill="#808000"/><rect x="14" y="14" width="1" height="1" fill="#000"/><rect x="15" y="14" width="1" height="1" fill="#fff"/><rect x="16" y="14" width="1" height="1" fill="#000"/><rect x="0" y="15" width="3" height="1" fill="#000"/><rect x="3" y="15" width="4" height="1" fill="#808000"/><rect x="7" y="15" width="4" height="1" fill="#000"/><rect x="11" y="15" width="3" height="1" fill="#808000"/><rect x="14" y="15" width="1" height="1" fill="#000"/><rect x="15" y="15" width="1" height="1" fill="#fff"/><rect x="16" y="15" width="1" height="1" fill="#000"/><rect x="2" y="16" width="15" height="1" fill="#000"/><rect x="3" y="17" width="13" height="1" fill="#000"/></svg></div>
<div class="tb" style="left:473px"><svg width="18" height="15" viewBox="0 0 18 15" shape-rendering="crispEdges" style="position:absolute;left:3px;top:5px;"><rect x="5" y="0" width="13" height="1" fill="#000"/><rect x="4" y="1" width="1" height="1" fill="#000"/><rect x="5" y="1" width="12" height="1" fill="#fff"/><rect x="17" y="1" width="1" height="1" fill="#000"/><rect x="4" y="2" width="1" height="1" fill="#000"/><rect x="5" y="2" width="2" height="1" fill="#fff"/><rect x="7" y="2" width="1" height="1" fill="#000"/><rect x="8" y="2" width="1" height="1" fill="#fff"/><rect x="9" y="2" width="1" height="1" fill="#000"/><rect x="10" y="2" width="4" height="1" fill="#fff"/><rect x="14" y="2" width="1" height="1" fill="#000"/><rect x="15" y="2" width="2" height="1" fill="#fff"/><rect x="17" y="2" width="1" height="1" fill="#000"/><rect x="0" y="3" width="2" height="1" fill="#000"/><rect x="4" y="3" width="1" height="1" fill="#000"/><rect x="5" y="3" width="2" height="1" fill="#fff"/><rect x="7" y="3" width="1" height="1" fill="#000"/><rect x="8" y="3" width="2" height="1" fill="#fff"/><rect x="10" y="3" width="1" height="1" fill="#000"/><rect x="11" y="3" width="3" height="1" fill="#fff"/><rect x="14" y="3" width="1" height="1" fill="#000"/><rect x="15" y="3" width="2" height="1" fill="#fff"/><rect x="17" y="3" width="1" height="1" fill="#000"/><rect x="0" y="4" width="8" height="1" fill="#000"/><rect x="8" y="4" width="3" height="1" fill="#fff"/><rect x="11" y="4" width="1" height="1" fill="#000"/><rect x="12" y="4" width="1" height="1" fill="#fff"/><rect x="13" y="4" width="5" height="1" fill="#000"/><rect x="0" y="5" width="1" height="1" fill="#000"/><rect x="1" y="5" width="3" height="1" fill="#fff"/><rect x="4" y="5" width="1" height="1" fill="#000"/><rect x="5" y="5" width="2" height="1" fill="#fff"/><rect x="7" y="5" width="1" height="1" fill="#000"/><rect x="8" y="5" width="4" height="1" fill="#fff"/><rect x="12" y="5" width="1" height="1" fill="#000"/><rect x="13" y="5" width="1" height="1" fill="#fff"/><rect x="14" y="5" width="1" height="1" fill="#000"/><rect x="15" y="5" width="2" height="1" fill="#fff"/><rect x="17" y="5" width="1" height="1" fill="#000"/><rect x="0" y="6" width="1" height="1" fill="#000"/><rect x="1" y="6" width="1" height="1" fill="#fff"/><rect x="5" y="6" width="1" height="1" fill="#000"/><rect x="6" y="6" width="11" height="1" fill="#fff"/><rect x="17" y="6" width="1" height="1" fill="#000"/><rect x="0" y="7" width="1" height="1" fill="#000"/><rect x="1" y="7" width="1" height="1" fill="#fff"/><rect x="6" y="7" width="12" height="1" fill="#000"/><rect x="0" y="8" width="1" height="1" fill="#000"/><rect x="1" y="8" width="1" height="1" fill="#fff"/><rect x="9" y="8" width="3" height="1" fill="#000"/><rect x="0" y="9" width="1" height="1" fill="#000"/><rect x="1" y="9" width="1" height="1" fill="#fff"/><rect x="8" y="9" width="5" height="1" fill="#000"/><rect x="0" y="10" width="1" height="1" fill="#000"/><rect x="1" y="10" width="1" height="1" fill="#fff"/><rect x="7" y="10" width="2" height="1" fill="#000"/><rect x="0" y="11" width="1" height="1" fill="#000"/><rect x="1" y="11" width="1" height="1" fill="#fff"/><rect x="6" y="11" width="2" height="1" fill="#000"/><rect x="0" y="12" width="1" height="1" fill="#000"/><rect x="1" y="12" width="1" height="1" fill="#fff"/><rect x="4" y="12" width="3" height="1" fill="#000"/><rect x="0" y="13" width="1" height="1" fill="#000"/><rect x="1" y="13" width="1" height="1" fill="#fff"/><rect x="3" y="13" width="3" height="1" fill="#000"/><rect x="0" y="14" width="4" height="1" fill="#000"/></svg></div>
<svg width="16" height="14" viewBox="0 0 16 14" shape-rendering="crispEdges" style="position:absolute;left:6px;top:2px;"><rect x="10" y="0" width="6" height="1" fill="#000"/><rect x="10" y="1" width="1" height="1" fill="#000"/><rect x="11" y="1" width="1" height="1" fill="#ff0"/><rect x="12" y="1" width="2" height="1" fill="#b0b040"/><rect x="14" y="1" width="1" height="1" fill="#f00"/><rect x="15" y="1" width="1" height="1" fill="#b0b040"/><rect x="0" y="2" width="7" height="1" fill="#000"/><rect x="10" y="2" width="1" height="1" fill="#000"/><rect x="11" y="2" width="1" height="1" fill="#ff0"/><rect x="12" y="2" width="4" height="1" fill="#b0b040"/><rect x="0" y="3" width="7" height="1" fill="#c0c0c0"/><rect x="7" y="3" width="1" height="1" fill="#f00"/><rect x="10" y="3" width="6" height="1" fill="#000"/><rect x="0" y="4" width="1" height="1" fill="#c0c0c0"/><rect x="1" y="4" width="2" height="1" fill="#ff0"/><rect x="3" y="4" width="2" height="1" fill="#0f0"/><rect x="5" y="4" width="1" height="1" fill="#fff"/><rect x="6" y="4" width="1" height="1" fill="#c0c0c0"/><rect x="7" y="4" width="2" height="1" fill="#f00"/><rect x="10" y="4" width="1" height="1" fill="#000"/><rect x="11" y="4" width="1" height="1" fill="#0f0"/><rect x="12" y="4" width="1" height="1" fill="#ff0"/><rect x="13" y="4" width="1" height="1" fill="#fff"/><rect x="14" y="4" width="1" height="1" fill="#008000"/><rect x="15" y="4" width="1" height="1" fill="#b0b040"/><rect x="0" y="5" width="1" height="1" fill="#c0c0c0"/><rect x="1" y="5" width="1" height="1" fill="#ff0"/><rect x="2" y="5" width="1" height="1" fill="#f00"/><rect x="3" y="5" width="3" height="1" fill="#0f0"/><rect x="6" y="5" width="1" height="1" fill="#c0c0c0"/><rect x="7" y="5" width="1" height="1" fill="#000"/><rect x="8" y="5" width="2" height="1" fill="#f00"/><rect x="10" y="5" width="1" height="1" fill="#000"/><rect x="11" y="5" width="1" height="1" fill="#0f0"/><rect x="12" y="5" width="1" height="1" fill="#ff0"/><rect x="13" y="5" width="1" height="1" fill="#fff"/><rect x="14" y="5" width="1" height="1" fill="#008000"/><rect x="15" y="5" width="1" height="1" fill="#b0b040"/><rect x="0" y="6" width="1" height="1" fill="#c0c0c0"/><rect x="1" y="6" width="1" height="1" fill="#ff0"/><rect x="2" y="6" width="1" height="1" fill="#f0f"/><rect x="3" y="6" width="1" height="1" fill="#00f"/><rect x="4" y="6" width="2" height="1" fill="#0f0"/><rect x="6" y="6" width="1" height="1" fill="#c0c0c0"/><rect x="7" y="6" width="1" height="1" fill="#000"/><rect x="9" y="6" width="1" height="1" fill="#f00"/><rect x="10" y="6" width="6" height="1" fill="#000"/><rect x="0" y="7" width="1" height="1" fill="#c0c0c0"/><rect x="1" y="7" width="4" height="1" fill="#00f"/><rect x="5" y="7" width="1" height="1" fill="#0f0"/><rect x="6" y="7" width="1" height="1" fill="#c0c0c0"/><rect x="7" y="7" width="1" height="1" fill="#000"/><rect x="10" y="7" width="1" height="1" fill="#000"/><rect x="11" y="7" width="1" height="1" fill="#b0b040"/><rect x="12" y="7" width="3" height="1" fill="#80d040"/><rect x="15" y="7" width="1" height="1" fill="#b0b040"/><rect x="0" y="8" width="7" height="1" fill="#c0c0c0"/><rect x="7" y="8" width="1" height="1" fill="#000"/><rect x="10" y="8" width="1" height="1" fill="#000"/><rect x="11" y="8" width="1" height="1" fill="#ff0"/><rect x="12" y="8" width="3" height="1" fill="#80d040"/><rect x="15" y="8" width="1" height="1" fill="#ff0"/><rect x="0" y="9" width="1" height="1" fill="#000"/><rect x="1" y="9" width="5" height="1" fill="#c0c0c0"/><rect x="6" y="9" width="1" height="1" fill="#000"/><rect x="10" y="9" width="6" height="1" fill="#000"/><rect x="0" y="10" width="3" height="1" fill="#000"/><rect x="3" y="10" width="2" height="1" fill="#c0c0c0"/><rect x="5" y="10" width="3" height="1" fill="#000"/><rect x="10" y="10" width="1" height="1" fill="#000"/><rect x="11" y="10" width="1" height="1" fill="#b0b040"/><rect x="12" y="10" width="3" height="1" fill="#000"/><rect x="15" y="10" width="1" height="1" fill="#b0b040"/><rect x="1" y="11" width="3" height="1" fill="#808000"/><rect x="4" y="11" width="2" height="1" fill="#c0c0c0"/><rect x="6" y="11" width="2" height="1" fill="#808000"/><rect x="10" y="11" width="1" height="1" fill="#000"/><rect x="11" y="11" width="1" height="1" fill="#ff0"/><rect x="12" y="11" width="4" height="1" fill="#b0b040"/><rect x="10" y="12" width="1" height="1" fill="#000"/><rect x="11" y="12" width="1" height="1" fill="#ff0"/><rect x="12" y="12" width="4" height="1" fill="#b0b040"/><rect x="10" y="13" width="6" height="1" fill="#000"/></svg>
<div class="wb" style="left:916px"><svg width="16" height="14" viewBox="0 0 16 14" shape-rendering="crispEdges" style="position:absolute;left:-1px;top:-1px;"><rect x="4" y="9" width="6" height="1" fill="#000"/><rect x="4" y="10" width="6" height="1" fill="#000"/></svg></div><div class="wb" style="left:932px"><svg width="16" height="14" viewBox="0 0 16 14" shape-rendering="crispEdges" style="position:absolute;left:-1px;top:-1px;"><rect x="5" y="2" width="6" height="1" fill="#000"/><rect x="5" y="3" width="6" height="1" fill="#000"/><rect x="5" y="4" width="1" height="1" fill="#000"/><rect x="10" y="4" width="1" height="1" fill="#000"/><rect x="3" y="5" width="6" height="1" fill="#000"/><rect x="10" y="5" width="1" height="1" fill="#000"/><rect x="3" y="6" width="6" height="1" fill="#000"/><rect x="10" y="6" width="1" height="1" fill="#000"/><rect x="3" y="7" width="1" height="1" fill="#000"/><rect x="8" y="7" width="3" height="1" fill="#000"/><rect x="3" y="8" width="1" height="1" fill="#000"/><rect x="8" y="8" width="1" height="1" fill="#000"/><rect x="3" y="9" width="1" height="1" fill="#000"/><rect x="8" y="9" width="1" height="1" fill="#000"/><rect x="3" y="10" width="6" height="1" fill="#000"/></svg></div><div class="wb" style="left:950px"><svg width="16" height="14" viewBox="0 0 16 14" shape-rendering="crispEdges" style="position:absolute;left:-1px;top:-1px;"><rect x="4" y="3" width="2" height="1" fill="#000"/><rect x="10" y="3" width="2" height="1" fill="#000"/><rect x="5" y="4" width="2" height="1" fill="#000"/><rect x="9" y="4" width="2" height="1" fill="#000"/><rect x="6" y="5" width="4" height="1" fill="#000"/><rect x="7" y="6" width="2" height="1" fill="#000"/><rect x="6" y="7" width="4" height="1" fill="#000"/><rect x="5" y="8" width="2" height="1" fill="#000"/><rect x="9" y="8" width="2" height="1" fill="#000"/><rect x="4" y="9" width="2" height="1" fill="#000"/><rect x="10" y="9" width="2" height="1" fill="#000"/></svg></div>
<div id="term" style="will-change:transform">
<span class="t g" style="left:426.5px;top:92px">Op:</span>
<span class="t w" style="left:474.5px;top:92px">SBC</span>
<span class="t w" style="left:606.5px;top:92px">QPADEV0006</span>
<span class="t w" style="left:762.5px;top:92px">2/25/00</span>
<span class="t w" style="left:858.5px;top:92px">15:14:14</span>
<span class="t c" style="left:30.5px;top:118px">EDIT FUNCTIONS</span>
<span class="t c" style="left:474.5px;top:118px">SBC70MDL2</span>
<span class="t g" style="left:18.5px;top:144px">File name. . . :</span>
<span class="t w" style="left:222.5px;top:144px">Customer</span>
<span class="t w" style="left:714.5px;top:144px"><b>*</b><b>*</b></span>
<span class="t w" style="left:774.5px;top:144px">1ST LEVEL</span>
<span class="t w" style="left:906.5px;top:144px"><b>*</b><b>*</b></span>
<i class="u" style="left:42px;top:191px;width:300px"></i>
<i class="u" style="left:354px;top:191px;width:300px"></i>
<i class="u" style="left:666px;top:191px;width:300px"></i>
<span class="t g" style="left:18.5px;top:196px">?</span>
<span class="t g" style="left:42.5px;top:196px">Function</span>
<span class="t g" style="left:354.5px;top:196px">Function type</span>
<span class="t g" style="left:666.5px;top:196px">Access path</span>
<i class="u" style="left:18px;top:243px;width:12px"></i>
<span class="t w" style="left:42.5px;top:222px">excusrprg 1</span>
<span class="t w" style="left:354.5px;top:222px">Execute user program</span>
<span class="t w" style="left:666.5px;top:222px">Retrieval index</span>
<i class="u" style="left:18px;top:269px;width:12px"></i>
<span class="t w" style="left:42.5px;top:248px">MY EDIT FILE</span>
<span class="t w" style="left:354.5px;top:248px">Edit file</span>
<span class="t w" style="left:666.5px;top:248px">Retrieval index</span>
<i class="u" style="left:18px;top:295px;width:12px"></i>
<span class="t w" style="left:42.5px;top:274px">Select Customer</span>
<span class="t w" style="left:354.5px;top:274px">Select record</span>
<span class="t w" style="left:666.5px;top:274px">Retrieval index</span>
<i class="u" style="left:18px;top:321px;width:12px"></i>
<span class="t w" style="left:42.5px;top:300px">USER: Validate subfile re</span>
<span class="t w" style="left:354.5px;top:300px">Execute external function</span>
<span class="t w" style="left:666.5px;top:300px"><b>*</b>NONE</span>
<span class="t w" style="left:18.5px;top:300px">P</span>
<i class="u" style="left:42px;top:347px;width:300px"></i>
<i class="u" style="left:354px;top:347px;width:300px"></i>
<i class="u" style="left:666px;top:347px;width:300px"></i>
<i class="u" style="left:18px;top:373px;width:12px"></i>
<i class="u" style="left:42px;top:373px;width:300px"></i>
<i class="u" style="left:354px;top:373px;width:300px"></i>
<i class="u" style="left:666px;top:373px;width:300px"></i>
<i class="u" style="left:18px;top:399px;width:12px"></i>
<i class="u" style="left:42px;top:399px;width:300px"></i>
<i class="u" style="left:354px;top:399px;width:300px"></i>
<i class="u" style="left:666px;top:399px;width:300px"></i>
<i class="u" style="left:18px;top:425px;width:12px"></i>
<i class="u" style="left:42px;top:425px;width:300px"></i>
<i class="u" style="left:354px;top:425px;width:300px"></i>
<i class="u" style="left:666px;top:425px;width:300px"></i>
<i class="u" style="left:18px;top:451px;width:12px"></i>
<i class="u" style="left:42px;top:451px;width:300px"></i>
<i class="u" style="left:354px;top:451px;width:300px"></i>
<i class="u" style="left:666px;top:451px;width:300px"></i>
<i class="u" style="left:18px;top:477px;width:12px"></i>
<i class="u" style="left:42px;top:477px;width:300px"></i>
<i class="u" style="left:354px;top:477px;width:300px"></i>
<i class="u" style="left:666px;top:477px;width:300px"></i>
<i class="u" style="left:18px;top:503px;width:12px"></i>
<i class="u" style="left:42px;top:503px;width:300px"></i>
<i class="u" style="left:354px;top:503px;width:300px"></i>
<i class="u" style="left:666px;top:503px;width:300px"></i>
<i class="u" style="left:18px;top:529px;width:12px"></i>
<i class="u" style="left:42px;top:529px;width:300px"></i>
<i class="u" style="left:354px;top:529px;width:300px"></i>
<i class="u" style="left:666px;top:529px;width:300px"></i>
<i class="u" style="left:18px;top:555px;width:12px"></i>
<i class="u" style="left:42px;top:555px;width:300px"></i>
<i class="u" style="left:354px;top:555px;width:300px"></i>
<i class="u" style="left:666px;top:555px;width:300px"></i>
<span class="t w" style="left:870.5px;top:560px">More...</span>
<span class="t c" style="left:18.5px;top:586px">SEL: Z-Details, P-Parms, F-Action diagram, S-Device design, N-Narr, O-Open,</span>
<span class="t c" style="left:42.5px;top:612px">T-Structure, A-Access path, U-Usage, G/J-Generate, D-Delete, C-Copy, L-Lock.</span>
<span class="t c" style="left:18.5px;top:638px">F3=Exit</span>
<span class="t c" style="left:198.5px;top:638px">F5=Reload</span>
<span class="t c" style="left:558.5px;top:638px">F7=File details</span>
<span class="t c" style="left:774.5px;top:638px">F9=Add function</span>
<span class="t c" style="left:18.5px;top:664px">F17=Services</span>
<span class="t c" style="left:198.5px;top:664px">F21=Copy <b>*</b>Template function</span>
<i class="blk" style="left:18px;top:326px;width:12px;height:21px;background:#fff"></i>
<i class="blk" style="left:18px;top:349px;width:12px;height:3px;background:#fff"></i>
<i class="blk" style="left:42px;top:300px;width:322px;height:24px;border:1px dotted #fff;box-sizing:content-box"></i>
<i class="blk" style="left:6px;top:717px;width:960px;height:2px;background:#009090"></i>
<span class="t c" style="left:6px;top:720px">M</span>
<span class="t c" style="left:18px;top:717px">A</span>
<i class="blk" style="left:18px;top:738px;width:12px;height:1px;background:#009090"></i>
<i class="blk" style="left:30px;top:720px;width:12px;height:26px;background:#008080"></i>
<span class="t c" style="left:78px;top:720px">b</span>
<span class="t w" style="left:894.5px;top:720px">10/002</span>
</div>
</body></html>
